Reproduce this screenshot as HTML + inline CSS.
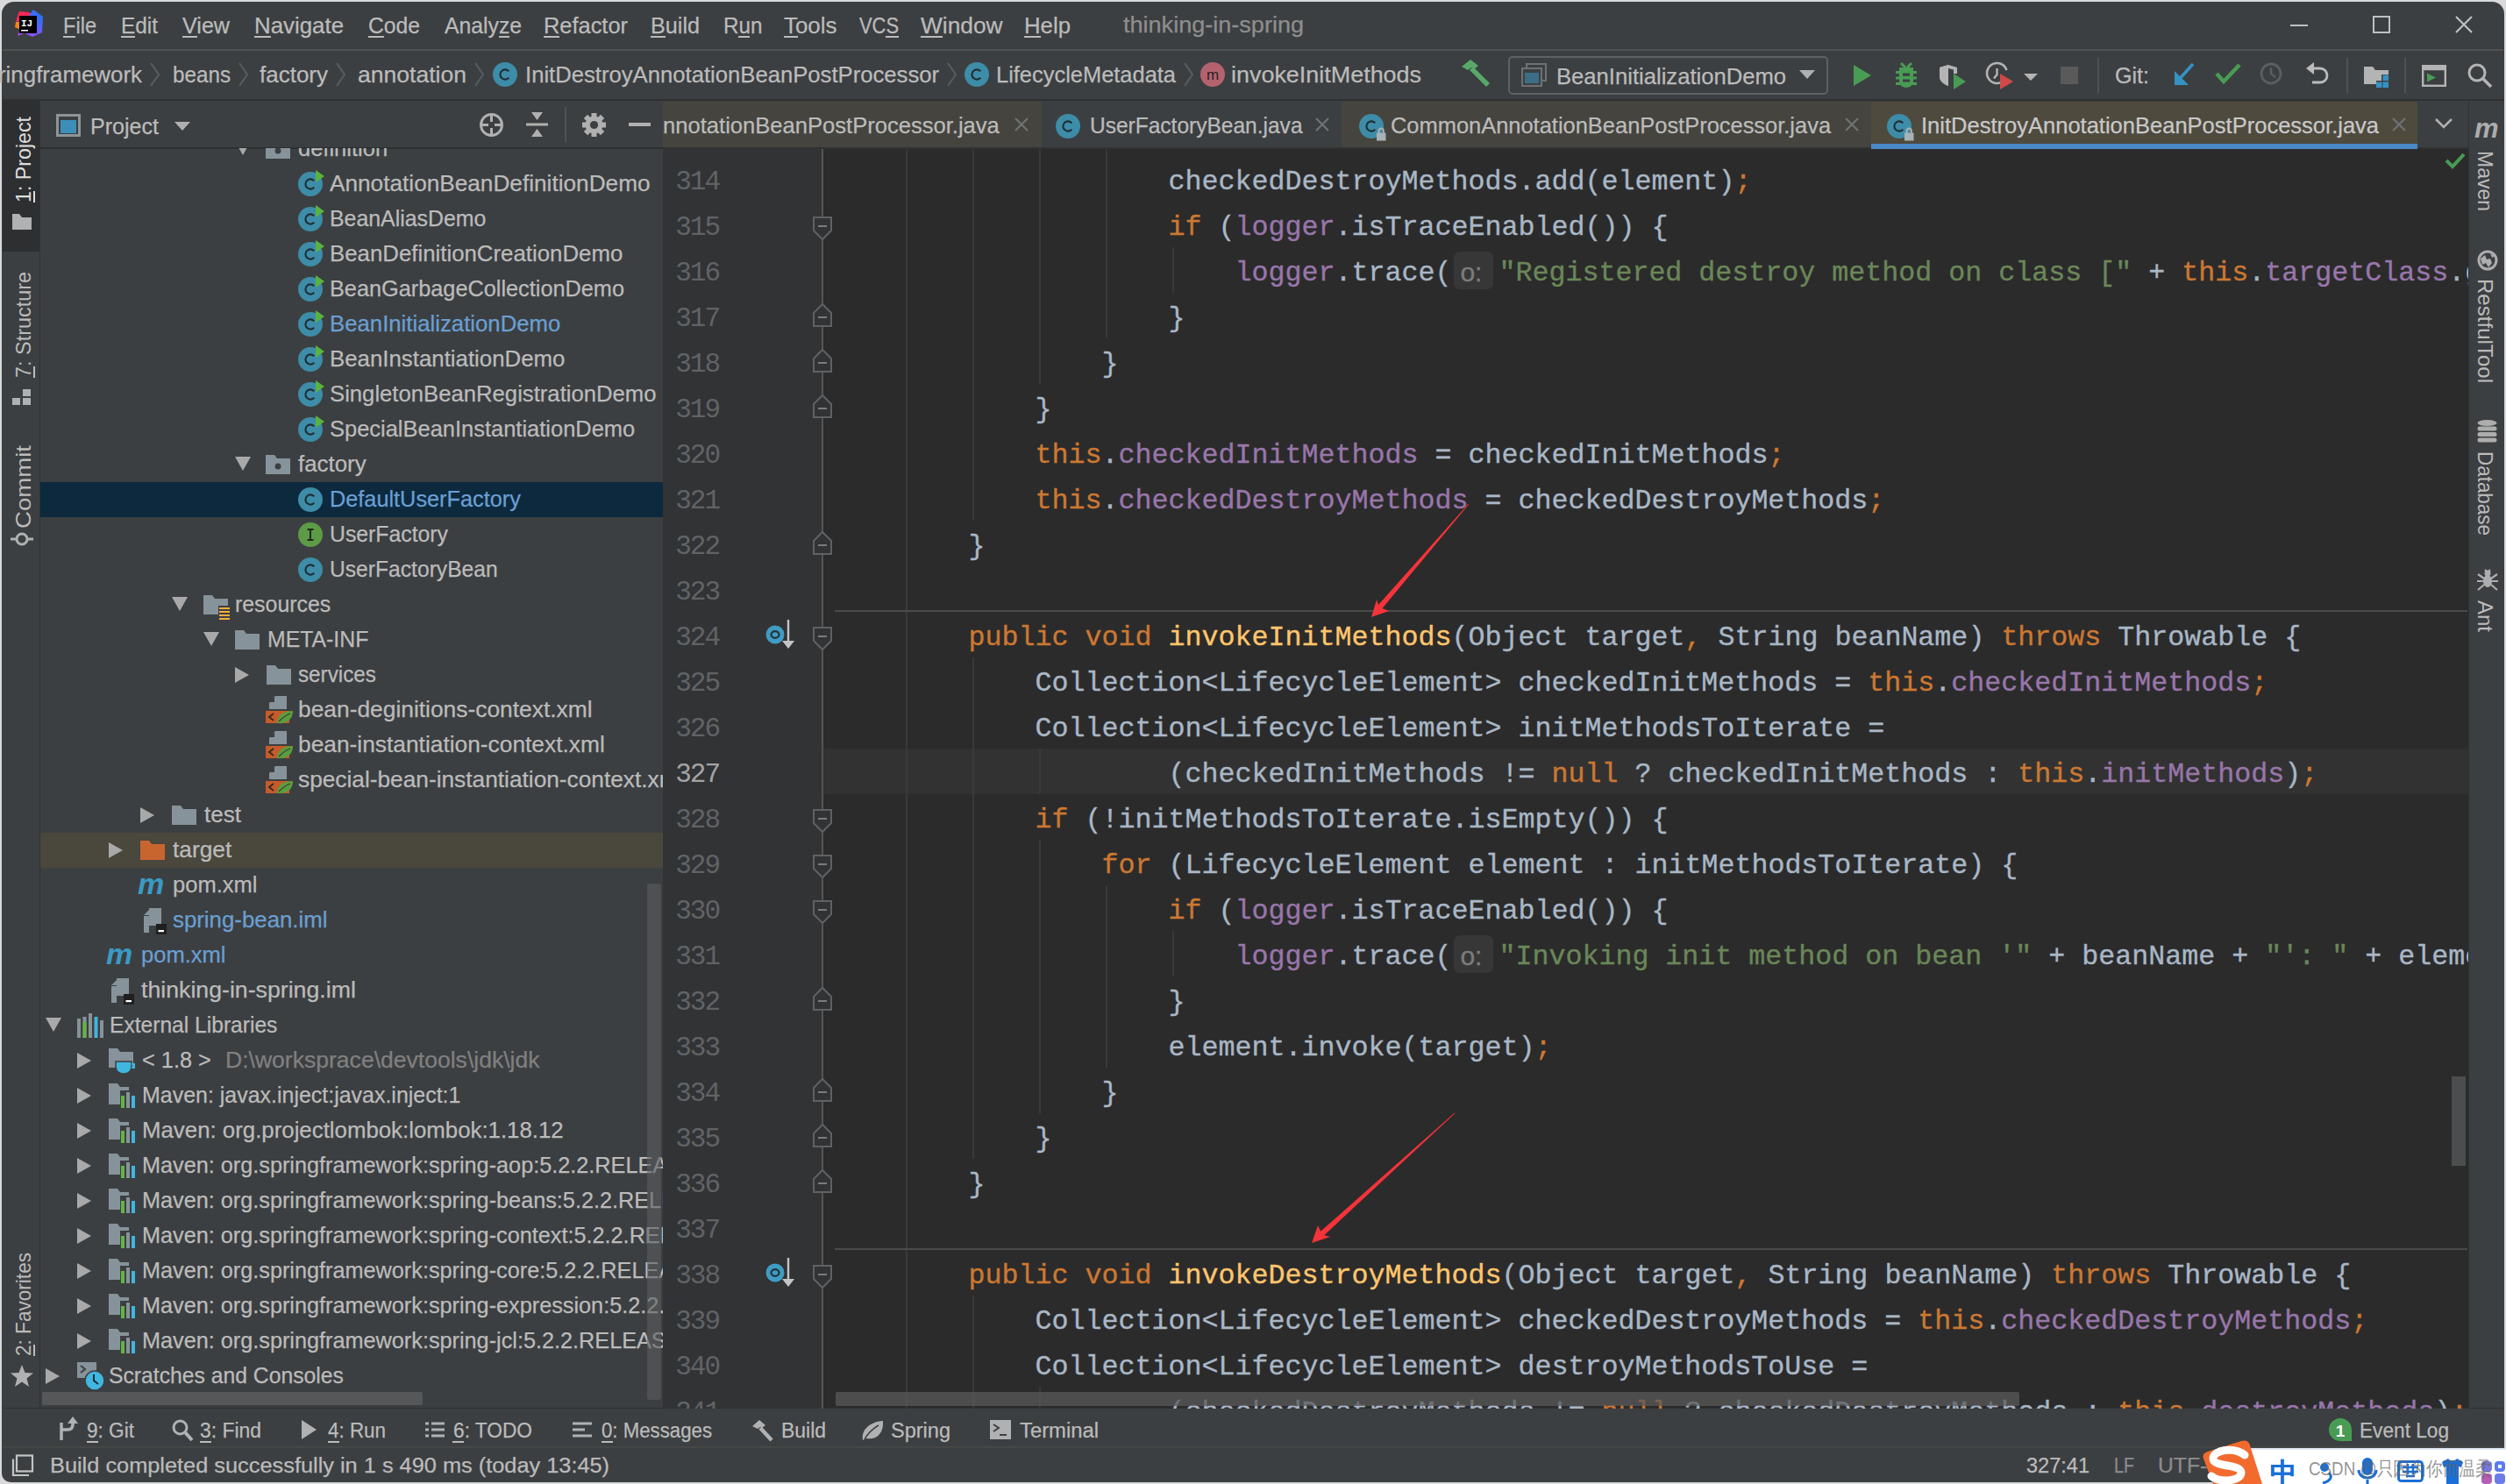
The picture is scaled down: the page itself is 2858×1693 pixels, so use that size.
<!DOCTYPE html>
<html><head><meta charset="utf-8"><title>thinking-in-spring</title>
<style>
html,body{margin:0;padding:0;}
body{width:2858px;height:1693px;overflow:hidden;position:relative;background:#d9d9dc;font-family:"Liberation Sans",sans-serif;}
svg{overflow:visible;}
u{text-decoration:underline;text-underline-offset:4px;text-decoration-thickness:2px;}
</style></head><body>
<div style="position:absolute;left:2px;top:2px;width:2854px;height:1689px;background:#3c3f41;border-radius:14px 14px 10px 10px;"></div>
<div style="position:absolute;left:3px;top:56px;width:2852px;height:2px;background:#515151;"></div>
<div style="position:absolute;left:3px;top:113px;width:2852px;height:2px;background:#2f3133;"></div>
<div style="position:absolute;left:3px;top:115px;width:42px;height:1491px;background:#3c3f41;"></div>
<div style="position:absolute;left:3px;top:115px;width:42px;height:172px;background:#2d2f31;"></div>
<div style="position:absolute;left:45px;top:115px;width:1px;height:1491px;background:#2f3133;"></div>
<div style="position:absolute;left:46px;top:115px;width:710px;height:1491px;background:#3c3f41;"></div>
<div style="position:absolute;left:46px;top:168px;width:710px;height:2px;background:#2d2f30;"></div>
<div style="position:absolute;left:756px;top:115px;width:2059px;height:53px;background:#3c3f41;"></div>
<div style="position:absolute;left:756px;top:168px;width:2059px;height:2px;background:#323232;"></div>
<div style="position:absolute;left:756px;top:170px;width:2059px;height:1437px;background:#2b2b2b;"></div>
<div style="position:absolute;left:756px;top:170px;width:182px;height:1437px;background:#313335;"></div>
<div style="position:absolute;left:2815px;top:115px;width:1px;height:1491px;background:#2f3133;"></div>
<div style="position:absolute;left:2816px;top:115px;width:39px;height:1491px;background:#3c3f41;"></div>
<div style="position:absolute;left:3px;top:1606px;width:2852px;height:1px;background:#2f3133;"></div>
<div style="position:absolute;left:3px;top:1650px;width:2852px;height:2px;background:#474747;"></div>
<div style="position:absolute;left:756px;top:170px;width:2059px;height:1437px;overflow:hidden;">
<div style="position:absolute;left:183px;top:684px;width:2059px;height:52px;background:#323232;"></div>
<div style="position:absolute;left:0px;top:684px;width:182px;height:52px;background:#313335;"></div>
<div style="position:absolute;left:277px;top:0px;width:2px;height:1516px;background:#393939;"></div>
<div style="position:absolute;left:353px;top:0px;width:2px;height:424px;background:#393939;"></div>
<div style="position:absolute;left:429px;top:0px;width:2px;height:268px;background:#393939;"></div>
<div style="position:absolute;left:505px;top:0px;width:2px;height:216px;background:#393939;"></div>
<div style="position:absolute;left:581px;top:112px;width:2px;height:52px;background:#393939;"></div>
<div style="position:absolute;left:353px;top:580px;width:2px;height:572px;background:#393939;"></div>
<div style="position:absolute;left:429px;top:684px;width:2px;height:52px;background:#393939;"></div>
<div style="position:absolute;left:429px;top:788px;width:2px;height:312px;background:#393939;"></div>
<div style="position:absolute;left:505px;top:840px;width:2px;height:208px;background:#393939;"></div>
<div style="position:absolute;left:581px;top:892px;width:2px;height:52px;background:#393939;"></div>
<div style="position:absolute;left:353px;top:1308px;width:2px;height:208px;background:#393939;"></div>
<div style="position:absolute;left:429px;top:1412px;width:2px;height:52px;background:#393939;"></div>
<div style="position:absolute;left:196px;top:525.5px;width:1862px;height:2px;background:#4b4b4b;"></div>
<div style="position:absolute;left:196px;top:1253.5px;width:1862px;height:2px;background:#4b4b4b;"></div>
<div style="position:absolute;left:-59px;width:123px;text-align:right;top:-40px;height:52px;line-height:52px;font-family:'Liberation Mono',monospace;font-size:31px;letter-spacing:-2px;color:#606366;white-space:pre;">313</div>
<div style="position:absolute;left:-59px;width:123px;text-align:right;top:12px;height:52px;line-height:52px;font-family:'Liberation Mono',monospace;font-size:31px;letter-spacing:-2px;color:#606366;white-space:pre;">314</div>
<div style="position:absolute;left:-59px;width:123px;text-align:right;top:64px;height:52px;line-height:52px;font-family:'Liberation Mono',monospace;font-size:31px;letter-spacing:-2px;color:#606366;white-space:pre;">315</div>
<div style="position:absolute;left:-59px;width:123px;text-align:right;top:116px;height:52px;line-height:52px;font-family:'Liberation Mono',monospace;font-size:31px;letter-spacing:-2px;color:#606366;white-space:pre;">316</div>
<div style="position:absolute;left:-59px;width:123px;text-align:right;top:168px;height:52px;line-height:52px;font-family:'Liberation Mono',monospace;font-size:31px;letter-spacing:-2px;color:#606366;white-space:pre;">317</div>
<div style="position:absolute;left:-59px;width:123px;text-align:right;top:220px;height:52px;line-height:52px;font-family:'Liberation Mono',monospace;font-size:31px;letter-spacing:-2px;color:#606366;white-space:pre;">318</div>
<div style="position:absolute;left:-59px;width:123px;text-align:right;top:272px;height:52px;line-height:52px;font-family:'Liberation Mono',monospace;font-size:31px;letter-spacing:-2px;color:#606366;white-space:pre;">319</div>
<div style="position:absolute;left:-59px;width:123px;text-align:right;top:324px;height:52px;line-height:52px;font-family:'Liberation Mono',monospace;font-size:31px;letter-spacing:-2px;color:#606366;white-space:pre;">320</div>
<div style="position:absolute;left:-59px;width:123px;text-align:right;top:376px;height:52px;line-height:52px;font-family:'Liberation Mono',monospace;font-size:31px;letter-spacing:-2px;color:#606366;white-space:pre;">321</div>
<div style="position:absolute;left:-59px;width:123px;text-align:right;top:428px;height:52px;line-height:52px;font-family:'Liberation Mono',monospace;font-size:31px;letter-spacing:-2px;color:#606366;white-space:pre;">322</div>
<div style="position:absolute;left:-59px;width:123px;text-align:right;top:480px;height:52px;line-height:52px;font-family:'Liberation Mono',monospace;font-size:31px;letter-spacing:-2px;color:#606366;white-space:pre;">323</div>
<div style="position:absolute;left:-59px;width:123px;text-align:right;top:532px;height:52px;line-height:52px;font-family:'Liberation Mono',monospace;font-size:31px;letter-spacing:-2px;color:#606366;white-space:pre;">324</div>
<div style="position:absolute;left:-59px;width:123px;text-align:right;top:584px;height:52px;line-height:52px;font-family:'Liberation Mono',monospace;font-size:31px;letter-spacing:-2px;color:#606366;white-space:pre;">325</div>
<div style="position:absolute;left:-59px;width:123px;text-align:right;top:636px;height:52px;line-height:52px;font-family:'Liberation Mono',monospace;font-size:31px;letter-spacing:-2px;color:#606366;white-space:pre;">326</div>
<div style="position:absolute;left:-59px;width:123px;text-align:right;top:688px;height:52px;line-height:52px;font-family:'Liberation Mono',monospace;font-size:31px;letter-spacing:-2px;color:#a4a3a3;white-space:pre;">327</div>
<div style="position:absolute;left:-59px;width:123px;text-align:right;top:740px;height:52px;line-height:52px;font-family:'Liberation Mono',monospace;font-size:31px;letter-spacing:-2px;color:#606366;white-space:pre;">328</div>
<div style="position:absolute;left:-59px;width:123px;text-align:right;top:792px;height:52px;line-height:52px;font-family:'Liberation Mono',monospace;font-size:31px;letter-spacing:-2px;color:#606366;white-space:pre;">329</div>
<div style="position:absolute;left:-59px;width:123px;text-align:right;top:844px;height:52px;line-height:52px;font-family:'Liberation Mono',monospace;font-size:31px;letter-spacing:-2px;color:#606366;white-space:pre;">330</div>
<div style="position:absolute;left:-59px;width:123px;text-align:right;top:896px;height:52px;line-height:52px;font-family:'Liberation Mono',monospace;font-size:31px;letter-spacing:-2px;color:#606366;white-space:pre;">331</div>
<div style="position:absolute;left:-59px;width:123px;text-align:right;top:948px;height:52px;line-height:52px;font-family:'Liberation Mono',monospace;font-size:31px;letter-spacing:-2px;color:#606366;white-space:pre;">332</div>
<div style="position:absolute;left:-59px;width:123px;text-align:right;top:1000px;height:52px;line-height:52px;font-family:'Liberation Mono',monospace;font-size:31px;letter-spacing:-2px;color:#606366;white-space:pre;">333</div>
<div style="position:absolute;left:-59px;width:123px;text-align:right;top:1052px;height:52px;line-height:52px;font-family:'Liberation Mono',monospace;font-size:31px;letter-spacing:-2px;color:#606366;white-space:pre;">334</div>
<div style="position:absolute;left:-59px;width:123px;text-align:right;top:1104px;height:52px;line-height:52px;font-family:'Liberation Mono',monospace;font-size:31px;letter-spacing:-2px;color:#606366;white-space:pre;">335</div>
<div style="position:absolute;left:-59px;width:123px;text-align:right;top:1156px;height:52px;line-height:52px;font-family:'Liberation Mono',monospace;font-size:31px;letter-spacing:-2px;color:#606366;white-space:pre;">336</div>
<div style="position:absolute;left:-59px;width:123px;text-align:right;top:1208px;height:52px;line-height:52px;font-family:'Liberation Mono',monospace;font-size:31px;letter-spacing:-2px;color:#606366;white-space:pre;">337</div>
<div style="position:absolute;left:-59px;width:123px;text-align:right;top:1260px;height:52px;line-height:52px;font-family:'Liberation Mono',monospace;font-size:31px;letter-spacing:-2px;color:#606366;white-space:pre;">338</div>
<div style="position:absolute;left:-59px;width:123px;text-align:right;top:1312px;height:52px;line-height:52px;font-family:'Liberation Mono',monospace;font-size:31px;letter-spacing:-2px;color:#606366;white-space:pre;">339</div>
<div style="position:absolute;left:-59px;width:123px;text-align:right;top:1364px;height:52px;line-height:52px;font-family:'Liberation Mono',monospace;font-size:31px;letter-spacing:-2px;color:#606366;white-space:pre;">340</div>
<div style="position:absolute;left:-59px;width:123px;text-align:right;top:1416px;height:52px;line-height:52px;font-family:'Liberation Mono',monospace;font-size:31px;letter-spacing:-2px;color:#606366;white-space:pre;">341</div>
<div style="position:absolute;left:272.5px;top:12px;height:52px;line-height:52px;font-family:'Liberation Mono',monospace;font-size:31.67px;white-space:pre;-webkit-text-stroke:0.35px currentColor;">                <span style="color:#a9b7c6">checkedDestroyMethods</span><span style="color:#a9b7c6">.</span><span style="color:#a9b7c6">add</span><span style="color:#a9b7c6">(</span><span style="color:#a9b7c6">element</span><span style="color:#a9b7c6">)</span><span style="color:#cc7832">;</span></div>
<div style="position:absolute;left:272.5px;top:64px;height:52px;line-height:52px;font-family:'Liberation Mono',monospace;font-size:31.67px;white-space:pre;-webkit-text-stroke:0.35px currentColor;">                <span style="color:#cc7832">if</span> <span style="color:#a9b7c6">(</span><span style="color:#9876aa">logger</span><span style="color:#a9b7c6">.</span><span style="color:#a9b7c6">isTraceEnabled</span><span style="color:#a9b7c6">(</span><span style="color:#a9b7c6">)</span><span style="color:#a9b7c6">)</span> <span style="color:#a9b7c6">{</span></div>
<div style="position:absolute;left:272.5px;top:116px;height:52px;line-height:52px;font-family:'Liberation Mono',monospace;font-size:31.67px;white-space:pre;-webkit-text-stroke:0.35px currentColor;">                    <span style="color:#9876aa">logger</span><span style="color:#a9b7c6">.</span><span style="color:#a9b7c6">trace</span><span style="color:#a9b7c6">(</span><span style="display:inline-block;vertical-align:top;width:54px;height:52px;position:relative;"><span style="position:absolute;left:3px;top:1px;width:45px;height:43px;background:#373737;border-radius:7px;"></span><span style="position:absolute;left:10px;top:-1px;color:#7c7c7c;font-family:'Liberation Sans',sans-serif;font-size:30px;">o:</span></span><span style="color:#6a8759">&quot;Registered destroy method on class [&quot;</span> <span style="color:#a9b7c6">+</span> <span style="color:#cc7832">this</span><span style="color:#a9b7c6">.</span><span style="color:#9876aa">targetClass</span><span style="color:#a9b7c6">.</span><span style="color:#a9b7c6">getName</span><span style="color:#a9b7c6">(</span><span style="color:#a9b7c6">)</span> <span style="color:#a9b7c6">+</span> <span style="color:#6a8759">&quot;]: &quot;</span> <span style="color:#a9b7c6">+</span> <span style="color:#a9b7c6">element</span><span style="color:#a9b7c6">)</span><span style="color:#cc7832">;</span></div>
<div style="position:absolute;left:272.5px;top:168px;height:52px;line-height:52px;font-family:'Liberation Mono',monospace;font-size:31.67px;white-space:pre;-webkit-text-stroke:0.35px currentColor;">                <span style="color:#a9b7c6">}</span></div>
<div style="position:absolute;left:272.5px;top:220px;height:52px;line-height:52px;font-family:'Liberation Mono',monospace;font-size:31.67px;white-space:pre;-webkit-text-stroke:0.35px currentColor;">            <span style="color:#a9b7c6">}</span></div>
<div style="position:absolute;left:272.5px;top:272px;height:52px;line-height:52px;font-family:'Liberation Mono',monospace;font-size:31.67px;white-space:pre;-webkit-text-stroke:0.35px currentColor;">        <span style="color:#a9b7c6">}</span></div>
<div style="position:absolute;left:272.5px;top:324px;height:52px;line-height:52px;font-family:'Liberation Mono',monospace;font-size:31.67px;white-space:pre;-webkit-text-stroke:0.35px currentColor;">        <span style="color:#cc7832">this</span><span style="color:#a9b7c6">.</span><span style="color:#9876aa">checkedInitMethods</span> <span style="color:#a9b7c6">=</span> <span style="color:#a9b7c6">checkedInitMethods</span><span style="color:#cc7832">;</span></div>
<div style="position:absolute;left:272.5px;top:376px;height:52px;line-height:52px;font-family:'Liberation Mono',monospace;font-size:31.67px;white-space:pre;-webkit-text-stroke:0.35px currentColor;">        <span style="color:#cc7832">this</span><span style="color:#a9b7c6">.</span><span style="color:#9876aa">checkedDestroyMethods</span> <span style="color:#a9b7c6">=</span> <span style="color:#a9b7c6">checkedDestroyMethods</span><span style="color:#cc7832">;</span></div>
<div style="position:absolute;left:272.5px;top:428px;height:52px;line-height:52px;font-family:'Liberation Mono',monospace;font-size:31.67px;white-space:pre;-webkit-text-stroke:0.35px currentColor;">    <span style="color:#a9b7c6">}</span></div>
<div style="position:absolute;left:272.5px;top:480px;height:52px;line-height:52px;font-family:'Liberation Mono',monospace;font-size:31.67px;white-space:pre;-webkit-text-stroke:0.35px currentColor;"></div>
<div style="position:absolute;left:272.5px;top:532px;height:52px;line-height:52px;font-family:'Liberation Mono',monospace;font-size:31.67px;white-space:pre;-webkit-text-stroke:0.35px currentColor;">    <span style="color:#cc7832">public</span> <span style="color:#cc7832">void</span> <span style="color:#ffc66d">invokeInitMethods</span><span style="color:#a9b7c6">(</span><span style="color:#a9b7c6">Object</span> <span style="color:#a9b7c6">target</span><span style="color:#cc7832">,</span> <span style="color:#a9b7c6">String</span> <span style="color:#a9b7c6">beanName</span><span style="color:#a9b7c6">)</span> <span style="color:#cc7832">throws</span> <span style="color:#a9b7c6">Throwable</span> <span style="color:#a9b7c6">{</span></div>
<div style="position:absolute;left:272.5px;top:584px;height:52px;line-height:52px;font-family:'Liberation Mono',monospace;font-size:31.67px;white-space:pre;-webkit-text-stroke:0.35px currentColor;">        <span style="color:#a9b7c6">Collection</span><span style="color:#a9b7c6">&lt;</span><span style="color:#a9b7c6">LifecycleElement</span><span style="color:#a9b7c6">&gt;</span> <span style="color:#a9b7c6">checkedInitMethods</span> <span style="color:#a9b7c6">=</span> <span style="color:#cc7832">this</span><span style="color:#a9b7c6">.</span><span style="color:#9876aa">checkedInitMethods</span><span style="color:#cc7832">;</span></div>
<div style="position:absolute;left:272.5px;top:636px;height:52px;line-height:52px;font-family:'Liberation Mono',monospace;font-size:31.67px;white-space:pre;-webkit-text-stroke:0.35px currentColor;">        <span style="color:#a9b7c6">Collection</span><span style="color:#a9b7c6">&lt;</span><span style="color:#a9b7c6">LifecycleElement</span><span style="color:#a9b7c6">&gt;</span> <span style="color:#a9b7c6">initMethodsToIterate</span> <span style="color:#a9b7c6">=</span></div>
<div style="position:absolute;left:272.5px;top:688px;height:52px;line-height:52px;font-family:'Liberation Mono',monospace;font-size:31.67px;white-space:pre;-webkit-text-stroke:0.35px currentColor;">                <span style="color:#a9b7c6">(</span><span style="color:#a9b7c6">checkedInitMethods</span> <span style="color:#a9b7c6">!</span><span style="color:#a9b7c6">=</span> <span style="color:#cc7832">null</span> <span style="color:#a9b7c6">?</span> <span style="color:#a9b7c6">checkedInitMethods</span> <span style="color:#a9b7c6">:</span> <span style="color:#cc7832">this</span><span style="color:#a9b7c6">.</span><span style="color:#9876aa">initMethods</span><span style="color:#a9b7c6">)</span><span style="color:#cc7832">;</span></div>
<div style="position:absolute;left:272.5px;top:740px;height:52px;line-height:52px;font-family:'Liberation Mono',monospace;font-size:31.67px;white-space:pre;-webkit-text-stroke:0.35px currentColor;">        <span style="color:#cc7832">if</span> <span style="color:#a9b7c6">(</span><span style="color:#a9b7c6">!</span><span style="color:#a9b7c6">initMethodsToIterate</span><span style="color:#a9b7c6">.</span><span style="color:#a9b7c6">isEmpty</span><span style="color:#a9b7c6">(</span><span style="color:#a9b7c6">)</span><span style="color:#a9b7c6">)</span> <span style="color:#a9b7c6">{</span></div>
<div style="position:absolute;left:272.5px;top:792px;height:52px;line-height:52px;font-family:'Liberation Mono',monospace;font-size:31.67px;white-space:pre;-webkit-text-stroke:0.35px currentColor;">            <span style="color:#cc7832">for</span> <span style="color:#a9b7c6">(</span><span style="color:#a9b7c6">LifecycleElement</span> <span style="color:#a9b7c6">element</span> <span style="color:#a9b7c6">:</span> <span style="color:#a9b7c6">initMethodsToIterate</span><span style="color:#a9b7c6">)</span> <span style="color:#a9b7c6">{</span></div>
<div style="position:absolute;left:272.5px;top:844px;height:52px;line-height:52px;font-family:'Liberation Mono',monospace;font-size:31.67px;white-space:pre;-webkit-text-stroke:0.35px currentColor;">                <span style="color:#cc7832">if</span> <span style="color:#a9b7c6">(</span><span style="color:#9876aa">logger</span><span style="color:#a9b7c6">.</span><span style="color:#a9b7c6">isTraceEnabled</span><span style="color:#a9b7c6">(</span><span style="color:#a9b7c6">)</span><span style="color:#a9b7c6">)</span> <span style="color:#a9b7c6">{</span></div>
<div style="position:absolute;left:272.5px;top:896px;height:52px;line-height:52px;font-family:'Liberation Mono',monospace;font-size:31.67px;white-space:pre;-webkit-text-stroke:0.35px currentColor;">                    <span style="color:#9876aa">logger</span><span style="color:#a9b7c6">.</span><span style="color:#a9b7c6">trace</span><span style="color:#a9b7c6">(</span><span style="display:inline-block;vertical-align:top;width:54px;height:52px;position:relative;"><span style="position:absolute;left:3px;top:1px;width:45px;height:43px;background:#373737;border-radius:7px;"></span><span style="position:absolute;left:10px;top:-1px;color:#7c7c7c;font-family:'Liberation Sans',sans-serif;font-size:30px;">o:</span></span><span style="color:#6a8759">&quot;Invoking init method on bean &#x27;&quot;</span> <span style="color:#a9b7c6">+</span> <span style="color:#a9b7c6">beanName</span> <span style="color:#a9b7c6">+</span> <span style="color:#6a8759">&quot;&#x27;: &quot;</span> <span style="color:#a9b7c6">+</span> <span style="color:#a9b7c6">element</span><span style="color:#a9b7c6">.</span><span style="color:#a9b7c6">getMethod</span><span style="color:#a9b7c6">(</span><span style="color:#a9b7c6">)</span><span style="color:#a9b7c6">)</span><span style="color:#cc7832">;</span></div>
<div style="position:absolute;left:272.5px;top:948px;height:52px;line-height:52px;font-family:'Liberation Mono',monospace;font-size:31.67px;white-space:pre;-webkit-text-stroke:0.35px currentColor;">                <span style="color:#a9b7c6">}</span></div>
<div style="position:absolute;left:272.5px;top:1000px;height:52px;line-height:52px;font-family:'Liberation Mono',monospace;font-size:31.67px;white-space:pre;-webkit-text-stroke:0.35px currentColor;">                <span style="color:#a9b7c6">element</span><span style="color:#a9b7c6">.</span><span style="color:#a9b7c6">invoke</span><span style="color:#a9b7c6">(</span><span style="color:#a9b7c6">target</span><span style="color:#a9b7c6">)</span><span style="color:#cc7832">;</span></div>
<div style="position:absolute;left:272.5px;top:1052px;height:52px;line-height:52px;font-family:'Liberation Mono',monospace;font-size:31.67px;white-space:pre;-webkit-text-stroke:0.35px currentColor;">            <span style="color:#a9b7c6">}</span></div>
<div style="position:absolute;left:272.5px;top:1104px;height:52px;line-height:52px;font-family:'Liberation Mono',monospace;font-size:31.67px;white-space:pre;-webkit-text-stroke:0.35px currentColor;">        <span style="color:#a9b7c6">}</span></div>
<div style="position:absolute;left:272.5px;top:1156px;height:52px;line-height:52px;font-family:'Liberation Mono',monospace;font-size:31.67px;white-space:pre;-webkit-text-stroke:0.35px currentColor;">    <span style="color:#a9b7c6">}</span></div>
<div style="position:absolute;left:272.5px;top:1208px;height:52px;line-height:52px;font-family:'Liberation Mono',monospace;font-size:31.67px;white-space:pre;-webkit-text-stroke:0.35px currentColor;"></div>
<div style="position:absolute;left:272.5px;top:1260px;height:52px;line-height:52px;font-family:'Liberation Mono',monospace;font-size:31.67px;white-space:pre;-webkit-text-stroke:0.35px currentColor;">    <span style="color:#cc7832">public</span> <span style="color:#cc7832">void</span> <span style="color:#ffc66d">invokeDestroyMethods</span><span style="color:#a9b7c6">(</span><span style="color:#a9b7c6">Object</span> <span style="color:#a9b7c6">target</span><span style="color:#cc7832">,</span> <span style="color:#a9b7c6">String</span> <span style="color:#a9b7c6">beanName</span><span style="color:#a9b7c6">)</span> <span style="color:#cc7832">throws</span> <span style="color:#a9b7c6">Throwable</span> <span style="color:#a9b7c6">{</span></div>
<div style="position:absolute;left:272.5px;top:1312px;height:52px;line-height:52px;font-family:'Liberation Mono',monospace;font-size:31.67px;white-space:pre;-webkit-text-stroke:0.35px currentColor;">        <span style="color:#a9b7c6">Collection</span><span style="color:#a9b7c6">&lt;</span><span style="color:#a9b7c6">LifecycleElement</span><span style="color:#a9b7c6">&gt;</span> <span style="color:#a9b7c6">checkedDestroyMethods</span> <span style="color:#a9b7c6">=</span> <span style="color:#cc7832">this</span><span style="color:#a9b7c6">.</span><span style="color:#9876aa">checkedDestroyMethods</span><span style="color:#cc7832">;</span></div>
<div style="position:absolute;left:272.5px;top:1364px;height:52px;line-height:52px;font-family:'Liberation Mono',monospace;font-size:31.67px;white-space:pre;-webkit-text-stroke:0.35px currentColor;">        <span style="color:#a9b7c6">Collection</span><span style="color:#a9b7c6">&lt;</span><span style="color:#a9b7c6">LifecycleElement</span><span style="color:#a9b7c6">&gt;</span> <span style="color:#a9b7c6">destroyMethodsToUse</span> <span style="color:#a9b7c6">=</span></div>
<div style="position:absolute;left:272.5px;top:1416px;height:52px;line-height:52px;font-family:'Liberation Mono',monospace;font-size:31.67px;white-space:pre;-webkit-text-stroke:0.35px currentColor;">                <span style="color:#a9b7c6">(</span><span style="color:#a9b7c6">checkedDestroyMethods</span> <span style="color:#a9b7c6">!</span><span style="color:#a9b7c6">=</span> <span style="color:#cc7832">null</span> <span style="color:#a9b7c6">?</span> <span style="color:#a9b7c6">checkedDestroyMethods</span> <span style="color:#a9b7c6">:</span> <span style="color:#cc7832">this</span><span style="color:#a9b7c6">.</span><span style="color:#9876aa">destroyMethods</span><span style="color:#a9b7c6">)</span><span style="color:#cc7832">;</span></div>
<div style="position:absolute;left:181px;top:0px;width:2px;height:1437px;background:#555555;"></div>
</div>
<svg style="position:absolute;left:927px;top:247px;" width="22" height="27" viewBox="0 0 22 27"><path d="M1,1 H21 V16 L11,26 L1,16 Z" fill="#313335" stroke="#5f6163" stroke-width="2"/><path d="M6,11 H16" stroke="#7a7c7e" stroke-width="2"/></svg>
<svg style="position:absolute;left:927px;top:715px;" width="22" height="27" viewBox="0 0 22 27"><path d="M1,1 H21 V16 L11,26 L1,16 Z" fill="#313335" stroke="#5f6163" stroke-width="2"/><path d="M6,11 H16" stroke="#7a7c7e" stroke-width="2"/></svg>
<svg style="position:absolute;left:927px;top:923px;" width="22" height="27" viewBox="0 0 22 27"><path d="M1,1 H21 V16 L11,26 L1,16 Z" fill="#313335" stroke="#5f6163" stroke-width="2"/><path d="M6,11 H16" stroke="#7a7c7e" stroke-width="2"/></svg>
<svg style="position:absolute;left:927px;top:975px;" width="22" height="27" viewBox="0 0 22 27"><path d="M1,1 H21 V16 L11,26 L1,16 Z" fill="#313335" stroke="#5f6163" stroke-width="2"/><path d="M6,11 H16" stroke="#7a7c7e" stroke-width="2"/></svg>
<svg style="position:absolute;left:927px;top:1027px;" width="22" height="27" viewBox="0 0 22 27"><path d="M1,1 H21 V16 L11,26 L1,16 Z" fill="#313335" stroke="#5f6163" stroke-width="2"/><path d="M6,11 H16" stroke="#7a7c7e" stroke-width="2"/></svg>
<svg style="position:absolute;left:927px;top:1443px;" width="22" height="27" viewBox="0 0 22 27"><path d="M1,1 H21 V16 L11,26 L1,16 Z" fill="#313335" stroke="#5f6163" stroke-width="2"/><path d="M6,11 H16" stroke="#7a7c7e" stroke-width="2"/></svg>
<svg style="position:absolute;left:927px;top:346px;" width="22" height="27" viewBox="0 0 22 27"><path d="M1,26 H21 V11 L11,1 L1,11 Z" fill="#313335" stroke="#5f6163" stroke-width="2"/><path d="M6,16 H16" stroke="#7a7c7e" stroke-width="2"/></svg>
<svg style="position:absolute;left:927px;top:398px;" width="22" height="27" viewBox="0 0 22 27"><path d="M1,26 H21 V11 L11,1 L1,11 Z" fill="#313335" stroke="#5f6163" stroke-width="2"/><path d="M6,16 H16" stroke="#7a7c7e" stroke-width="2"/></svg>
<svg style="position:absolute;left:927px;top:450px;" width="22" height="27" viewBox="0 0 22 27"><path d="M1,26 H21 V11 L11,1 L1,11 Z" fill="#313335" stroke="#5f6163" stroke-width="2"/><path d="M6,16 H16" stroke="#7a7c7e" stroke-width="2"/></svg>
<svg style="position:absolute;left:927px;top:606px;" width="22" height="27" viewBox="0 0 22 27"><path d="M1,26 H21 V11 L11,1 L1,11 Z" fill="#313335" stroke="#5f6163" stroke-width="2"/><path d="M6,16 H16" stroke="#7a7c7e" stroke-width="2"/></svg>
<svg style="position:absolute;left:927px;top:1126px;" width="22" height="27" viewBox="0 0 22 27"><path d="M1,26 H21 V11 L11,1 L1,11 Z" fill="#313335" stroke="#5f6163" stroke-width="2"/><path d="M6,16 H16" stroke="#7a7c7e" stroke-width="2"/></svg>
<svg style="position:absolute;left:927px;top:1230px;" width="22" height="27" viewBox="0 0 22 27"><path d="M1,26 H21 V11 L11,1 L1,11 Z" fill="#313335" stroke="#5f6163" stroke-width="2"/><path d="M6,16 H16" stroke="#7a7c7e" stroke-width="2"/></svg>
<svg style="position:absolute;left:927px;top:1282px;" width="22" height="27" viewBox="0 0 22 27"><path d="M1,26 H21 V11 L11,1 L1,11 Z" fill="#313335" stroke="#5f6163" stroke-width="2"/><path d="M6,16 H16" stroke="#7a7c7e" stroke-width="2"/></svg>
<svg style="position:absolute;left:927px;top:1334px;" width="22" height="27" viewBox="0 0 22 27"><path d="M1,26 H21 V11 L11,1 L1,11 Z" fill="#313335" stroke="#5f6163" stroke-width="2"/><path d="M6,16 H16" stroke="#7a7c7e" stroke-width="2"/></svg>
<svg style="position:absolute;left:872px;top:707px;" width="36" height="34" viewBox="0 0 36 34"><circle cx="12" cy="17" r="10.5" fill="#3f9cc2"/><ellipse cx="12" cy="17" rx="4.5" ry="3.8" fill="none" stroke="#22333d" stroke-width="2.2"/><path d="M27,0 V28" stroke="#c4c4c4" stroke-width="2.4"/><path d="M20,24 L27,33 L34,24 Z" fill="#c4c4c4"/></svg>
<svg style="position:absolute;left:872px;top:1435px;" width="36" height="34" viewBox="0 0 36 34"><circle cx="12" cy="17" r="10.5" fill="#3f9cc2"/><ellipse cx="12" cy="17" rx="4.5" ry="3.8" fill="none" stroke="#22333d" stroke-width="2.2"/><path d="M27,0 V28" stroke="#c4c4c4" stroke-width="2.4"/><path d="M20,24 L27,33 L34,24 Z" fill="#c4c4c4"/></svg>
<svg style="position:absolute;left:0;top:0;" width="2858" height="1693"><polygon points="1674.7,574.7 1572.0,690.1 1570.0,684.0 1564.0,704.0 1584.0,697.0 1576.5,694.0 1675.3,575.3" fill="#f5333a"/></svg>
<svg style="position:absolute;left:0;top:0;" width="2858" height="1693"><polygon points="1658.7,1269.7 1506.2,1404.7 1503.0,1398.0 1496.0,1418.0 1517.0,1411.0 1510.2,1409.2 1659.3,1270.3" fill="#f5333a"/></svg>
<div style="position:absolute;left:2796px;top:1228px;width:16px;height:102px;background:#4b4d4f;"></div>
<div style="position:absolute;left:953px;top:1588px;width:1350px;height:16px;background:rgba(90,90,90,0.75);border-radius:2px;"></div>
<svg style="position:absolute;left:2788px;top:173px;" width="24" height="20" viewBox="0 0 24 20"><path d="M2,10 L9,17 L22,3" fill="none" stroke="#499c54" stroke-width="4"/></svg>
<svg style="position:absolute;left:16px;top:11px;" width="33" height="31" viewBox="0 0 33 31"><polygon points="6,2 17,3 22,8 12,15 2,13" fill="#fe2857"/><polygon points="2,14 10,14 8,23 1,20" fill="#fc801d"/><polygon points="22,0 33,8 32,26 21,31 12,27 4,30 8,18" fill="url(#ijg)"/><defs><linearGradient id="ijg" x1="0" y1="1" x2="1" y2="0"><stop offset="0" stop-color="#b345f1"/><stop offset="0.5" stop-color="#6d5cf5"/><stop offset="1" stop-color="#087cfa"/></linearGradient></defs><rect x="6" y="7" width="20" height="20" fill="#000"/><text x="8" y="19" font-family="Liberation Mono" font-weight="bold" font-size="11" fill="#fff">IJ</text><rect x="8" y="23" width="8" height="1.5" fill="#fff"/></svg>
<div style="position:absolute;left:72px;top:12.66px;height:32px;line-height:32px;font-size:25.5px;color:#bbbbbb;font-family:'Liberation Sans', sans-serif;white-space:pre;-webkit-text-stroke:0.25px currentColor;transform:scaleX(0.9249);transform-origin:0 0;">File</div>
<div style="position:absolute;left:72px;top:41px;width:14px;height:2px;background:#bbbbbb;"></div>
<div style="position:absolute;left:138px;top:12.66px;height:32px;line-height:32px;font-size:25.5px;color:#bbbbbb;font-family:'Liberation Sans', sans-serif;white-space:pre;-webkit-text-stroke:0.25px currentColor;transform:scaleX(0.9559);transform-origin:0 0;">Edit</div>
<div style="position:absolute;left:138px;top:41px;width:16px;height:2px;background:#bbbbbb;"></div>
<div style="position:absolute;left:208px;top:12.66px;height:32px;line-height:32px;font-size:25.5px;color:#bbbbbb;font-family:'Liberation Sans', sans-serif;white-space:pre;-webkit-text-stroke:0.25px currentColor;transform:scaleX(0.9852);transform-origin:0 0;">View</div>
<div style="position:absolute;left:208px;top:41px;width:17px;height:2px;background:#bbbbbb;"></div>
<div style="position:absolute;left:290px;top:12.66px;height:32px;line-height:32px;font-size:25.5px;color:#bbbbbb;font-family:'Liberation Sans', sans-serif;white-space:pre;-webkit-text-stroke:0.25px currentColor;transform:scaleX(1.0135);transform-origin:0 0;">Navigate</div>
<div style="position:absolute;left:290px;top:41px;width:19px;height:2px;background:#bbbbbb;"></div>
<div style="position:absolute;left:420px;top:12.66px;height:32px;line-height:32px;font-size:25.5px;color:#bbbbbb;font-family:'Liberation Sans', sans-serif;white-space:pre;-webkit-text-stroke:0.25px currentColor;transform:scaleX(0.9679);transform-origin:0 0;">Code</div>
<div style="position:absolute;left:420px;top:41px;width:18px;height:2px;background:#bbbbbb;"></div>
<div style="position:absolute;left:507px;top:12.66px;height:32px;line-height:32px;font-size:25.5px;color:#bbbbbb;font-family:'Liberation Sans', sans-serif;white-space:pre;-webkit-text-stroke:0.25px currentColor;transform:scaleX(0.9701);transform-origin:0 0;">Analyze</div>
<div style="position:absolute;left:569px;top:41px;width:12px;height:2px;background:#bbbbbb;"></div>
<div style="position:absolute;left:620px;top:12.66px;height:32px;line-height:32px;font-size:25.5px;color:#bbbbbb;font-family:'Liberation Sans', sans-serif;white-space:pre;-webkit-text-stroke:0.25px currentColor;transform:scaleX(0.9962);transform-origin:0 0;">Refactor</div>
<div style="position:absolute;left:620px;top:41px;width:18px;height:2px;background:#bbbbbb;"></div>
<div style="position:absolute;left:742px;top:12.66px;height:32px;line-height:32px;font-size:25.5px;color:#bbbbbb;font-family:'Liberation Sans', sans-serif;white-space:pre;-webkit-text-stroke:0.25px currentColor;transform:scaleX(0.9876);transform-origin:0 0;">Build</div>
<div style="position:absolute;left:742px;top:41px;width:17px;height:2px;background:#bbbbbb;"></div>
<div style="position:absolute;left:824.5px;top:12.66px;height:32px;line-height:32px;font-size:25.5px;color:#bbbbbb;font-family:'Liberation Sans', sans-serif;white-space:pre;-webkit-text-stroke:0.25px currentColor;transform:scaleX(0.9513);transform-origin:0 0;">Run</div>
<div style="position:absolute;left:842px;top:41px;width:13px;height:2px;background:#bbbbbb;"></div>
<div style="position:absolute;left:893.6px;top:12.66px;height:32px;line-height:32px;font-size:25.5px;color:#bbbbbb;font-family:'Liberation Sans', sans-serif;white-space:pre;-webkit-text-stroke:0.25px currentColor;transform:scaleX(1.0147);transform-origin:0 0;">Tools</div>
<div style="position:absolute;left:894px;top:41px;width:16px;height:2px;background:#bbbbbb;"></div>
<div style="position:absolute;left:980px;top:12.66px;height:32px;line-height:32px;font-size:25.5px;color:#bbbbbb;font-family:'Liberation Sans', sans-serif;white-space:pre;-webkit-text-stroke:0.25px currentColor;transform:scaleX(0.8582);transform-origin:0 0;">VCS</div>
<div style="position:absolute;left:1010px;top:41px;width:15px;height:2px;background:#bbbbbb;"></div>
<div style="position:absolute;left:1050px;top:12.66px;height:32px;line-height:32px;font-size:25.5px;color:#bbbbbb;font-family:'Liberation Sans', sans-serif;white-space:pre;-webkit-text-stroke:0.25px currentColor;transform:scaleX(1.0310);transform-origin:0 0;">Window</div>
<div style="position:absolute;left:1050px;top:41px;width:25px;height:2px;background:#bbbbbb;"></div>
<div style="position:absolute;left:1168px;top:12.66px;height:32px;line-height:32px;font-size:25.5px;color:#bbbbbb;font-family:'Liberation Sans', sans-serif;white-space:pre;-webkit-text-stroke:0.25px currentColor;transform:scaleX(1.0106);transform-origin:0 0;">Help</div>
<div style="position:absolute;left:1168px;top:41px;width:19px;height:2px;background:#bbbbbb;"></div>
<div style="position:absolute;left:1281px;top:12.16px;height:32px;line-height:32px;font-size:25.5px;color:#8e8e8e;font-family:'Liberation Sans', sans-serif;white-space:pre;-webkit-text-stroke:0.25px currentColor;transform:scaleX(1.0610);transform-origin:0 0;">thinking-in-spring</div>
<div style="position:absolute;left:2612px;top:28px;width:20px;height:2px;background:#c0c0c0;"></div>
<div style="position:absolute;left:2706px;top:18px;width:20px;height:20px;background:transparent;border:2px solid #c0c0c0;box-sizing:border-box;"></div>
<svg style="position:absolute;left:2800px;top:18px;" width="20" height="20" viewBox="0 0 20 20"><path d="M1,1 L19,19 M19,1 L1,19" stroke="#c0c0c0" stroke-width="2.2"/></svg>
<div style="position:absolute;left:-2px;top:69.16px;height:32px;line-height:32px;font-size:25.5px;color:#bbbbbb;font-family:'Liberation Sans', sans-serif;white-space:pre;-webkit-text-stroke:0.25px currentColor;transform:scaleX(1.0153);transform-origin:0 0;">ringframework</div>
<svg style="position:absolute;left:171px;top:71px;" width="12" height="28" viewBox="0 0 12 28"><path d="M1,1 L10,14 L1,27" fill="none" stroke="#5a5d5f" stroke-width="2"/></svg>
<div style="position:absolute;left:197px;top:69.16px;height:32px;line-height:32px;font-size:25.5px;color:#bbbbbb;font-family:'Liberation Sans', sans-serif;white-space:pre;-webkit-text-stroke:0.25px currentColor;transform:scaleX(0.9500);transform-origin:0 0;">beans</div>
<svg style="position:absolute;left:272px;top:71px;" width="12" height="28" viewBox="0 0 12 28"><path d="M1,1 L10,14 L1,27" fill="none" stroke="#5a5d5f" stroke-width="2"/></svg>
<div style="position:absolute;left:296px;top:69.16px;height:32px;line-height:32px;font-size:25.5px;color:#bbbbbb;font-family:'Liberation Sans', sans-serif;white-space:pre;-webkit-text-stroke:0.25px currentColor;transform:scaleX(1.0193);transform-origin:0 0;">factory</div>
<svg style="position:absolute;left:383px;top:71px;" width="12" height="28" viewBox="0 0 12 28"><path d="M1,1 L10,14 L1,27" fill="none" stroke="#5a5d5f" stroke-width="2"/></svg>
<div style="position:absolute;left:408px;top:69.16px;height:32px;line-height:32px;font-size:25.5px;color:#bbbbbb;font-family:'Liberation Sans', sans-serif;white-space:pre;-webkit-text-stroke:0.25px currentColor;transform:scaleX(1.0412);transform-origin:0 0;">annotation</div>
<svg style="position:absolute;left:541px;top:71px;" width="12" height="28" viewBox="0 0 12 28"><path d="M1,1 L10,14 L1,27" fill="none" stroke="#5a5d5f" stroke-width="2"/></svg>
<svg style="position:absolute;left:562px;top:71px;" width="28" height="28" viewBox="0 0 28 28"><circle cx="14" cy="14" r="14" fill="#3d8ca8"/><path d="M18.3,10.4 A5.6,5.6 0 1 0 18.3,17.6" fill="none" stroke="#1f2d33" stroke-width="2.1"/></svg>
<div style="position:absolute;left:599px;top:69.16px;height:32px;line-height:32px;font-size:25.5px;color:#bbbbbb;font-family:'Liberation Sans', sans-serif;white-space:pre;-webkit-text-stroke:0.25px currentColor;transform:scaleX(1.0061);transform-origin:0 0;">InitDestroyAnnotationBeanPostProcessor</div>
<svg style="position:absolute;left:1080px;top:71px;" width="12" height="28" viewBox="0 0 12 28"><path d="M1,1 L10,14 L1,27" fill="none" stroke="#5a5d5f" stroke-width="2"/></svg>
<svg style="position:absolute;left:1100px;top:71px;" width="28" height="28" viewBox="0 0 28 28"><circle cx="14" cy="14" r="14" fill="#3d8ca8"/><path d="M18.3,10.4 A5.6,5.6 0 1 0 18.3,17.6" fill="none" stroke="#1f2d33" stroke-width="2.1"/></svg>
<div style="position:absolute;left:1136px;top:69.16px;height:32px;line-height:32px;font-size:25.5px;color:#bbbbbb;font-family:'Liberation Sans', sans-serif;white-space:pre;-webkit-text-stroke:0.25px currentColor;transform:scaleX(0.9975);transform-origin:0 0;">LifecycleMetadata</div>
<svg style="position:absolute;left:1350px;top:71px;" width="12" height="28" viewBox="0 0 12 28"><path d="M1,1 L10,14 L1,27" fill="none" stroke="#5a5d5f" stroke-width="2"/></svg>
<svg style="position:absolute;left:1369px;top:71px;" width="28" height="28" viewBox="0 0 28 28"><circle cx="14" cy="14" r="14" fill="#b4636e"/><text x="14" y="19.5" text-anchor="middle" font-family="Liberation Sans" font-size="17" fill="#2b1d25">m</text></svg>
<div style="position:absolute;left:1404px;top:69.16px;height:32px;line-height:32px;font-size:25.5px;color:#bbbbbb;font-family:'Liberation Sans', sans-serif;white-space:pre;-webkit-text-stroke:0.25px currentColor;transform:scaleX(1.0559);transform-origin:0 0;">invokeInitMethods</div>
<div style="position:absolute;left:756px;top:116px;width:432px;height:52px;background:#45443e;"></div>
<div style="position:absolute;left:1530px;top:116px;width:604px;height:52px;background:#45443e;"></div>
<div style="position:absolute;left:2134px;top:116px;width:623px;height:48px;background:#4e4a3e;"></div>
<div style="position:absolute;left:2134px;top:164px;width:623px;height:6px;background:#4a88c7;"></div>
<div style="position:absolute;left:756px;top:116px;width:432px;height:52px;overflow:hidden;">
<div style="position:absolute;left:-16.80739733561478px;top:11.16px;height:32px;line-height:32px;font-size:25.5px;color:#bbbbbb;font-family:'Liberation Sans', sans-serif;white-space:pre;-webkit-text-stroke:0.25px currentColor;transform:scaleX(1.0027);transform-origin:0 0;">AnnotationBeanPostProcessor.java</div>
</div>
<svg style="position:absolute;left:1157px;top:134px;" width="16" height="16" viewBox="0 0 16 16"><path d="M1,1 L15,15 M15,1 L1,15" stroke="#6e7375" stroke-width="2.2"/></svg>
<svg style="position:absolute;left:1204px;top:130px;" width="28" height="28" viewBox="0 0 28 28"><circle cx="14" cy="14" r="14" fill="#3d8ca8"/><path d="M18.3,10.4 A5.6,5.6 0 1 0 18.3,17.6" fill="none" stroke="#1f2d33" stroke-width="2.1"/></svg>
<div style="position:absolute;left:1242.5px;top:127.16px;height:32px;line-height:32px;font-size:25.5px;color:#bbbbbb;font-family:'Liberation Sans', sans-serif;white-space:pre;-webkit-text-stroke:0.25px currentColor;transform:scaleX(0.9613);transform-origin:0 0;">UserFactoryBean.java</div>
<svg style="position:absolute;left:1500px;top:134px;" width="16" height="16" viewBox="0 0 16 16"><path d="M1,1 L15,15 M15,1 L1,15" stroke="#6e7375" stroke-width="2.2"/></svg>
<svg style="position:absolute;left:1550px;top:130px;" width="28" height="28" viewBox="0 0 28 28"><circle cx="14" cy="14" r="14" fill="#3d8ca8"/><path d="M18.3,10.4 A5.6,5.6 0 1 0 18.3,17.6" fill="none" stroke="#1f2d33" stroke-width="2.1"/><path d="M22.6,22.5 V19.2 A2.6,2.6 0 0 1 27.8,19.2 V22.5" fill="none" stroke="#a9b1b6" stroke-width="2"/><rect x="20" y="21.5" width="10.5" height="9" fill="#a9b1b6"/></svg>
<div style="position:absolute;left:1586px;top:127.16px;height:32px;line-height:32px;font-size:25.5px;color:#bbbbbb;font-family:'Liberation Sans', sans-serif;white-space:pre;-webkit-text-stroke:0.25px currentColor;transform:scaleX(0.9977);transform-origin:0 0;">CommonAnnotationBeanPostProcessor.java</div>
<svg style="position:absolute;left:2104px;top:134px;" width="16" height="16" viewBox="0 0 16 16"><path d="M1,1 L15,15 M15,1 L1,15" stroke="#6e7375" stroke-width="2.2"/></svg>
<svg style="position:absolute;left:2152px;top:130px;" width="28" height="28" viewBox="0 0 28 28"><circle cx="14" cy="14" r="14" fill="#3d8ca8"/><path d="M18.3,10.4 A5.6,5.6 0 1 0 18.3,17.6" fill="none" stroke="#1f2d33" stroke-width="2.1"/><path d="M22.6,22.5 V19.2 A2.6,2.6 0 0 1 27.8,19.2 V22.5" fill="none" stroke="#a9b1b6" stroke-width="2"/><rect x="20" y="21.5" width="10.5" height="9" fill="#a9b1b6"/></svg>
<div style="position:absolute;left:2191px;top:127.16px;height:32px;line-height:32px;font-size:25.5px;color:#c8c8c8;font-family:'Liberation Sans', sans-serif;white-space:pre;-webkit-text-stroke:0.25px currentColor;transform:scaleX(1.0008);transform-origin:0 0;">InitDestroyAnnotationBeanPostProcessor.java</div>
<svg style="position:absolute;left:2728px;top:134px;" width="16" height="16" viewBox="0 0 16 16"><path d="M1,1 L15,15 M15,1 L1,15" stroke="#6e7375" stroke-width="2.2"/></svg>
<svg style="position:absolute;left:2776px;top:134px;" width="22" height="14" viewBox="0 0 22 14"><path d="M2,2 L11,11 L20,2" fill="none" stroke="#b0b0b0" stroke-width="2.6"/></svg>
<svg style="position:absolute;left:1664px;top:66px;" width="36" height="36" viewBox="0 0 36 36"><path d="M3,10 L13,2 L22,9 L17,13 L14,11 L10,14 Z" fill="#59a869"/><path d="M14,12 L33,31" stroke="#59a869" stroke-width="5.5" stroke-linecap="butt"/></svg>
<div style="position:absolute;left:1720px;top:64px;width:365px;height:44px;background:transparent;border:2px solid #5e6163;border-radius:5px;box-sizing:border-box;"></div>
<svg style="position:absolute;left:1735px;top:72px;" width="30" height="28" viewBox="0 0 30 28"><rect x="6" y="1" width="22" height="19" fill="none" stroke="#6e7173" stroke-width="2"/><rect x="1" y="6" width="22" height="20" fill="#3c3f41" stroke="#6e7173" stroke-width="2"/><rect x="4" y="11" width="16" height="12" fill="#3b6e86"/></svg>
<div style="position:absolute;left:1775px;top:71.16px;height:32px;line-height:32px;font-size:25.5px;color:#bbbbbb;font-family:'Liberation Sans', sans-serif;white-space:pre;-webkit-text-stroke:0.25px currentColor;transform:scaleX(1.0046);transform-origin:0 0;">BeanInitializationDemo</div>
<svg style="position:absolute;left:2052px;top:80px;" width="18" height="10" viewBox="0 0 18 10"><polygon points="0,0 18,0 9,10" fill="#b0b0b0"/></svg>
<svg style="position:absolute;left:2114px;top:74px;" width="20" height="24" viewBox="0 0 20 24"><polygon points="0,0 20,12 0,24" fill="#499c54"/></svg>
<svg style="position:absolute;left:2162px;top:72px;" width="24" height="29" viewBox="0 0 24 29"><path d="M6,0 L11,5 M18,0 L13,5" stroke="#499c54" stroke-width="3"/><path d="M4,5 H20 V20 C20,25 16,28 12,28 C8,28 4,25 4,20 Z" fill="#499c54"/><rect x="0" y="9" width="24" height="3" fill="#499c54"/><rect x="0" y="15.5" width="24" height="3" fill="#499c54"/><rect x="0" y="22" width="24" height="3" fill="#499c54"/><rect x="8" y="11.5" width="8" height="3.2" fill="#3c3f41"/><rect x="8" y="18.5" width="8" height="3" fill="#3c3f41"/></svg>
<svg style="position:absolute;left:2212px;top:74px;" width="31" height="29" viewBox="0 0 31 29"><path d="M0,3 L10,0 L20,3 V10 H16 V5.5 L10,4 L4,5.5 V15 C4,19 7,21.5 10,23 L10,24 C5,22 0,19 0,13 Z" fill="#b4b4b4"/><path d="M10,0 V24 L9,24 V6 Z" fill="#b4b4b4"/><path d="M0,3 L10,0 V24 C5,22 0,19 0,13 Z" fill="#b4b4b4"/><polygon points="16,10 30,19 16,28" fill="#499c54"/></svg>
<svg style="position:absolute;left:2265px;top:72px;" width="62" height="31" viewBox="0 0 62 31"><path d="M19,21 A11.5,11.5 0 1 1 23.5,8" fill="none" stroke="#b4b4b4" stroke-width="2.6"/><path d="M12.5,6 V13 L9,17.5" fill="none" stroke="#b4b4b4" stroke-width="2.4"/><polygon points="16,12 31,21 16,30" fill="#d0494a"/><polygon points="43,12 59,12 51,20" fill="#b4b4b4"/></svg>
<div style="position:absolute;left:2350px;top:76px;width:20px;height:20px;background:#5a5a5a;"></div>
<div style="position:absolute;left:2392px;top:66px;width:2px;height:40px;background:#515151;"></div>
<div style="position:absolute;left:2412px;top:70.16px;height:32px;line-height:32px;font-size:25.5px;color:#bbbbbb;font-family:'Liberation Sans', sans-serif;white-space:pre;-webkit-text-stroke:0.25px currentColor;transform:scaleX(0.9831);transform-origin:0 0;">Git:</div>
<svg style="position:absolute;left:2478px;top:71px;" width="26" height="28" viewBox="0 0 26 28"><path d="M23,2 L5,22" stroke="#3592c4" stroke-width="3.5"/><polygon points="2,10 2,26 18,26" fill="#3592c4"/></svg>
<svg style="position:absolute;left:2526px;top:72px;" width="30" height="24" viewBox="0 0 30 24"><path d="M2,12 L10,21 L28,2" fill="none" stroke="#499c54" stroke-width="4.5"/></svg>
<svg style="position:absolute;left:2577px;top:70px;" width="26" height="28" viewBox="0 0 26 28"><circle cx="13" cy="14" r="11" fill="none" stroke="#5b5e60" stroke-width="2.8"/><path d="M13,7 V14 L18,18" fill="none" stroke="#5b5e60" stroke-width="2.5"/></svg>
<svg style="position:absolute;left:2629px;top:70px;" width="28" height="28" viewBox="0 0 28 28"><path d="M8,8 H17 A8,8 0 0 1 17,24 H8" fill="none" stroke="#bbbbbb" stroke-width="2.8"/><polygon points="1,8 10,1 10,15" fill="#bbbbbb"/></svg>
<div style="position:absolute;left:2676px;top:66px;width:2px;height:40px;background:#515151;"></div>
<svg style="position:absolute;left:2696px;top:76px;" width="30" height="25" viewBox="0 0 30 25"><path d="M0,0 H10 L13,4 H28 V9 H20 V16 H14 V20 H0 Z" fill="#b4b4b4"/><rect x="21.5" y="9.5" width="6.5" height="6.5" fill="#3592c4"/><rect x="14" y="17.5" width="6.5" height="6.5" fill="#3592c4"/><rect x="21.5" y="17.5" width="6.5" height="6.5" fill="#3592c4"/></svg>
<div style="position:absolute;left:2742px;top:66px;width:2px;height:40px;background:#515151;"></div>
<svg style="position:absolute;left:2762px;top:74px;" width="28" height="25" viewBox="0 0 28 25"><rect x="1.2" y="1.2" width="25.6" height="22.6" fill="none" stroke="#b4b4b4" stroke-width="2.4"/><rect x="1.2" y="1.2" width="25.6" height="5" fill="#b4b4b4"/><polygon points="6,9.5 16,14.5 6,19.5" fill="#499c54"/></svg>
<svg style="position:absolute;left:2814px;top:72px;" width="30" height="30" viewBox="0 0 30 30"><circle cx="11" cy="11" r="9" fill="none" stroke="#b4b4b4" stroke-width="3"/><path d="M17.5,17.5 L27,27" stroke="#b4b4b4" stroke-width="3.6"/></svg>
<svg style="position:absolute;left:64px;top:130px;" width="28" height="26" viewBox="0 0 28 26"><rect x="1.5" y="1.5" width="25" height="23" fill="none" stroke="#8e9498" stroke-width="3"/><rect x="5" y="7" width="18" height="15" fill="#3b8fb8"/></svg>
<div style="position:absolute;left:103px;top:127.66px;height:32px;line-height:32px;font-size:25.5px;color:#bbbbbb;font-family:'Liberation Sans', sans-serif;white-space:pre;-webkit-text-stroke:0.25px currentColor;transform:scaleX(0.9829);transform-origin:0 0;">Project</div>
<svg style="position:absolute;left:199px;top:139px;" width="18" height="10" viewBox="0 0 18 10"><polygon points="0,0 18,0 9,10" fill="#b0b0b0"/></svg>
<svg style="position:absolute;left:546px;top:127.5px;" width="29" height="29" viewBox="0 0 29 29"><circle cx="14.5" cy="14.5" r="12" fill="none" stroke="#b0b0b0" stroke-width="3"/><path d="M14.5,2 V11 M14.5,18 V27 M2,14.5 H11 M18,14.5 H27" stroke="#b0b0b0" stroke-width="3"/></svg>
<svg style="position:absolute;left:600px;top:126.5px;" width="25" height="30" viewBox="0 0 25 30"><path d="M0,15 H25" stroke="#b0b0b0" stroke-width="3"/><polygon points="6,1 19,1 12.5,10" fill="#b0b0b0"/><polygon points="6,29 19,29 12.5,20" fill="#b0b0b0"/></svg>
<div style="position:absolute;left:644px;top:122px;width:2px;height:40px;background:#515151;"></div>
<svg style="position:absolute;left:664px;top:128.5px;" width="27" height="27" viewBox="0 0 27 27"><circle cx="13.5" cy="13.5" r="10" fill="#b0b0b0"/><rect x="10.5" y="0" width="6" height="27" fill="#b0b0b0" transform="rotate(0 13.5 13.5)"/><rect x="10.5" y="0" width="6" height="27" fill="#b0b0b0" transform="rotate(45 13.5 13.5)"/><rect x="10.5" y="0" width="6" height="27" fill="#b0b0b0" transform="rotate(90 13.5 13.5)"/><rect x="10.5" y="0" width="6" height="27" fill="#b0b0b0" transform="rotate(135 13.5 13.5)"/><circle cx="13.5" cy="13.5" r="4.6" fill="#3c3f41"/></svg>
<div style="position:absolute;left:717px;top:140px;width:25px;height:4px;background:#b0b0b0;"></div>
<div style="position:absolute;left:46px;top:169px;width:710px;height:1437px;overflow:hidden;">
<div style="position:absolute;left:0px;top:381px;width:710px;height:40px;background:#0d293e;"></div>
<div style="position:absolute;left:0px;top:781px;width:710px;height:40px;background:#4a473d;"></div>
<svg style="position:absolute;left:222px;top:-8px;overflow:visible" width="18" height="16" viewBox="0 0 18 16"><polygon points="0,0 18,0 9,16" fill="#a9a9a9"/></svg>
<svg style="position:absolute;left:257px;top:-10px;overflow:visible" width="29" height="23" viewBox="0 0 29 23"><path d="M0,0 H10 L13,4 H28 V22 H0 Z" fill="#87939a"/><circle cx="14" cy="13" r="3.5" fill="#3c3f41"/></svg>
<div style="position:absolute;left:294px;top:-16.34px;height:32px;line-height:32px;font-size:25.5px;color:#bbbbbb;font-family:'Liberation Sans', sans-serif;white-space:pre;-webkit-text-stroke:0.25px currentColor;">definition</div>
<svg style="position:absolute;left:294px;top:27px;overflow:visible" width="28" height="28" viewBox="0 0 28 28"><circle cx="14" cy="14" r="14" fill="#3d8ca8"/><path d="M18.3,10.4 A5.6,5.6 0 1 0 18.3,17.6" fill="none" stroke="#1f2d33" stroke-width="2.1"/><polygon points="20,-2 30,5 20,12" fill="#59b23f"/></svg>
<div style="position:absolute;left:330px;top:23.66px;height:32px;line-height:32px;font-size:25.5px;color:#bbbbbb;font-family:'Liberation Sans', sans-serif;white-space:pre;-webkit-text-stroke:0.25px currentColor;transform:scaleX(1.0273);transform-origin:0 0;">AnnotationBeanDefinitionDemo</div>
<svg style="position:absolute;left:294px;top:67px;overflow:visible" width="28" height="28" viewBox="0 0 28 28"><circle cx="14" cy="14" r="14" fill="#3d8ca8"/><path d="M18.3,10.4 A5.6,5.6 0 1 0 18.3,17.6" fill="none" stroke="#1f2d33" stroke-width="2.1"/><polygon points="20,-2 30,5 20,12" fill="#59b23f"/></svg>
<div style="position:absolute;left:330px;top:63.66px;height:32px;line-height:32px;font-size:25.5px;color:#bbbbbb;font-family:'Liberation Sans', sans-serif;white-space:pre;-webkit-text-stroke:0.25px currentColor;transform:scaleX(0.9752);transform-origin:0 0;">BeanAliasDemo</div>
<svg style="position:absolute;left:294px;top:107px;overflow:visible" width="28" height="28" viewBox="0 0 28 28"><circle cx="14" cy="14" r="14" fill="#3d8ca8"/><path d="M18.3,10.4 A5.6,5.6 0 1 0 18.3,17.6" fill="none" stroke="#1f2d33" stroke-width="2.1"/><polygon points="20,-2 30,5 20,12" fill="#59b23f"/></svg>
<div style="position:absolute;left:330px;top:103.66px;height:32px;line-height:32px;font-size:25.5px;color:#bbbbbb;font-family:'Liberation Sans', sans-serif;white-space:pre;-webkit-text-stroke:0.25px currentColor;transform:scaleX(1.0120);transform-origin:0 0;">BeanDefinitionCreationDemo</div>
<svg style="position:absolute;left:294px;top:147px;overflow:visible" width="28" height="28" viewBox="0 0 28 28"><circle cx="14" cy="14" r="14" fill="#3d8ca8"/><path d="M18.3,10.4 A5.6,5.6 0 1 0 18.3,17.6" fill="none" stroke="#1f2d33" stroke-width="2.1"/><polygon points="20,-2 30,5 20,12" fill="#59b23f"/></svg>
<div style="position:absolute;left:330px;top:143.66px;height:32px;line-height:32px;font-size:25.5px;color:#bbbbbb;font-family:'Liberation Sans', sans-serif;white-space:pre;-webkit-text-stroke:0.25px currentColor;transform:scaleX(0.9918);transform-origin:0 0;">BeanGarbageCollectionDemo</div>
<svg style="position:absolute;left:294px;top:187px;overflow:visible" width="28" height="28" viewBox="0 0 28 28"><circle cx="14" cy="14" r="14" fill="#3d8ca8"/><path d="M18.3,10.4 A5.6,5.6 0 1 0 18.3,17.6" fill="none" stroke="#1f2d33" stroke-width="2.1"/><polygon points="20,-2 30,5 20,12" fill="#59b23f"/></svg>
<div style="position:absolute;left:330px;top:183.66px;height:32px;line-height:32px;font-size:25.5px;color:#6a9fd2;font-family:'Liberation Sans', sans-serif;white-space:pre;-webkit-text-stroke:0.25px currentColor;transform:scaleX(1.0096);transform-origin:0 0;">BeanInitializationDemo</div>
<svg style="position:absolute;left:294px;top:227px;overflow:visible" width="28" height="28" viewBox="0 0 28 28"><circle cx="14" cy="14" r="14" fill="#3d8ca8"/><path d="M18.3,10.4 A5.6,5.6 0 1 0 18.3,17.6" fill="none" stroke="#1f2d33" stroke-width="2.1"/><polygon points="20,-2 30,5 20,12" fill="#59b23f"/></svg>
<div style="position:absolute;left:330px;top:223.66px;height:32px;line-height:32px;font-size:25.5px;color:#bbbbbb;font-family:'Liberation Sans', sans-serif;white-space:pre;-webkit-text-stroke:0.25px currentColor;transform:scaleX(1.0126);transform-origin:0 0;">BeanInstantiationDemo</div>
<svg style="position:absolute;left:294px;top:267px;overflow:visible" width="28" height="28" viewBox="0 0 28 28"><circle cx="14" cy="14" r="14" fill="#3d8ca8"/><path d="M18.3,10.4 A5.6,5.6 0 1 0 18.3,17.6" fill="none" stroke="#1f2d33" stroke-width="2.1"/><polygon points="20,-2 30,5 20,12" fill="#59b23f"/></svg>
<div style="position:absolute;left:330px;top:263.66px;height:32px;line-height:32px;font-size:25.5px;color:#bbbbbb;font-family:'Liberation Sans', sans-serif;white-space:pre;-webkit-text-stroke:0.25px currentColor;transform:scaleX(1.0069);transform-origin:0 0;">SingletonBeanRegistrationDemo</div>
<svg style="position:absolute;left:294px;top:307px;overflow:visible" width="28" height="28" viewBox="0 0 28 28"><circle cx="14" cy="14" r="14" fill="#3d8ca8"/><path d="M18.3,10.4 A5.6,5.6 0 1 0 18.3,17.6" fill="none" stroke="#1f2d33" stroke-width="2.1"/><polygon points="20,-2 30,5 20,12" fill="#59b23f"/></svg>
<div style="position:absolute;left:330px;top:303.66px;height:32px;line-height:32px;font-size:25.5px;color:#bbbbbb;font-family:'Liberation Sans', sans-serif;white-space:pre;-webkit-text-stroke:0.25px currentColor;transform:scaleX(0.9986);transform-origin:0 0;">SpecialBeanInstantiationDemo</div>
<svg style="position:absolute;left:222px;top:352px;overflow:visible" width="18" height="16" viewBox="0 0 18 16"><polygon points="0,0 18,0 9,16" fill="#a9a9a9"/></svg>
<svg style="position:absolute;left:257px;top:350px;overflow:visible" width="29" height="23" viewBox="0 0 29 23"><path d="M0,0 H10 L13,4 H28 V22 H0 Z" fill="#87939a"/><circle cx="14" cy="13" r="3.5" fill="#3c3f41"/></svg>
<div style="position:absolute;left:294px;top:343.66px;height:32px;line-height:32px;font-size:25.5px;color:#bbbbbb;font-family:'Liberation Sans', sans-serif;white-space:pre;-webkit-text-stroke:0.25px currentColor;transform:scaleX(1.0141);transform-origin:0 0;">factory</div>
<svg style="position:absolute;left:294px;top:387px;overflow:visible" width="28" height="28" viewBox="0 0 28 28"><circle cx="14" cy="14" r="14" fill="#3d8ca8"/><path d="M18.3,10.4 A5.6,5.6 0 1 0 18.3,17.6" fill="none" stroke="#1f2d33" stroke-width="2.1"/></svg>
<div style="position:absolute;left:330px;top:383.66px;height:32px;line-height:32px;font-size:25.5px;color:#6a9fd2;font-family:'Liberation Sans', sans-serif;white-space:pre;-webkit-text-stroke:0.25px currentColor;transform:scaleX(0.9916);transform-origin:0 0;">DefaultUserFactory</div>
<svg style="position:absolute;left:294px;top:427px;overflow:visible" width="28" height="28" viewBox="0 0 28 28"><circle cx="14" cy="14" r="14" fill="#5d9b47"/><path d="M10.5,8 H17.5 M14,8 V20 M10.5,20 H17.5" fill="none" stroke="#1e2b1a" stroke-width="2"/></svg>
<div style="position:absolute;left:330px;top:423.66px;height:32px;line-height:32px;font-size:25.5px;color:#bbbbbb;font-family:'Liberation Sans', sans-serif;white-space:pre;-webkit-text-stroke:0.25px currentColor;transform:scaleX(0.9723);transform-origin:0 0;">UserFactory</div>
<svg style="position:absolute;left:294px;top:467px;overflow:visible" width="28" height="28" viewBox="0 0 28 28"><circle cx="14" cy="14" r="14" fill="#3d8ca8"/><path d="M18.3,10.4 A5.6,5.6 0 1 0 18.3,17.6" fill="none" stroke="#1f2d33" stroke-width="2.1"/></svg>
<div style="position:absolute;left:330px;top:463.66px;height:32px;line-height:32px;font-size:25.5px;color:#bbbbbb;font-family:'Liberation Sans', sans-serif;white-space:pre;-webkit-text-stroke:0.25px currentColor;transform:scaleX(0.9662);transform-origin:0 0;">UserFactoryBean</div>
<svg style="position:absolute;left:150px;top:512px;overflow:visible" width="18" height="16" viewBox="0 0 18 16"><polygon points="0,0 18,0 9,16" fill="#a9a9a9"/></svg>
<svg style="position:absolute;left:186px;top:510px;overflow:visible" width="29" height="23" viewBox="0 0 29 23"><path d="M0,0 H10 L13,4 H28 V22 H0 Z" fill="#87939a"/><rect x="17" y="12" width="13" height="17" fill="#3c3f41"/><path d="M18,15 H30 M18,19 H30 M18,23 H30 M18,27 H30" stroke="#f4af3d" stroke-width="2.2"/></svg>
<div style="position:absolute;left:222px;top:503.66px;height:32px;line-height:32px;font-size:25.5px;color:#bbbbbb;font-family:'Liberation Sans', sans-serif;white-space:pre;-webkit-text-stroke:0.25px currentColor;transform:scaleX(0.9754);transform-origin:0 0;">resources</div>
<svg style="position:absolute;left:186px;top:552px;overflow:visible" width="18" height="16" viewBox="0 0 18 16"><polygon points="0,0 18,0 9,16" fill="#a9a9a9"/></svg>
<svg style="position:absolute;left:222px;top:550px;overflow:visible" width="29" height="23" viewBox="0 0 29 23"><path d="M0,0 H10 L13,4 H28 V22 H0 Z" fill="#87939a"/></svg>
<div style="position:absolute;left:259px;top:543.66px;height:32px;line-height:32px;font-size:25.5px;color:#bbbbbb;font-family:'Liberation Sans', sans-serif;white-space:pre;-webkit-text-stroke:0.25px currentColor;transform:scaleX(0.9729);transform-origin:0 0;">META-INF</div>
<svg style="position:absolute;left:222px;top:592px;overflow:visible" width="16" height="18" viewBox="0 0 16 18"><polygon points="0,0 16,9 0,18" fill="#a9a9a9"/></svg>
<svg style="position:absolute;left:258px;top:590px;overflow:visible" width="29" height="23" viewBox="0 0 29 23"><path d="M0,0 H10 L13,4 H28 V22 H0 Z" fill="#87939a"/></svg>
<div style="position:absolute;left:294px;top:583.66px;height:32px;line-height:32px;font-size:25.5px;color:#bbbbbb;font-family:'Liberation Sans', sans-serif;white-space:pre;-webkit-text-stroke:0.25px currentColor;transform:scaleX(0.9506);transform-origin:0 0;">services</div>
<svg style="position:absolute;left:257px;top:625px;overflow:visible" width="32" height="32" viewBox="0 0 32 32"><path d="M4,0 H24 V15 H4 V8 L11,0 Z" fill="#87939a"/><path d="M4,7 L10,1 V7 Z" fill="#3c3f41"/><rect x="0" y="17" width="27" height="14" fill="#c75b2a"/><path d="M9,20 L4,24 L9,28" fill="none" stroke="#2b2b2b" stroke-width="1.8"/><path d="M13,31 C13,22 20,17 31,17 C31,27 24,32 13,31 Z" fill="#5a9e3c"/><path d="M15,29 C19,25 23,22 28,20" stroke="#3c3f41" stroke-width="1.2" fill="none"/></svg>
<div style="position:absolute;left:294px;top:623.66px;height:32px;line-height:32px;font-size:25.5px;color:#bbbbbb;font-family:'Liberation Sans', sans-serif;white-space:pre;-webkit-text-stroke:0.25px currentColor;transform:scaleX(1.0337);transform-origin:0 0;">bean-deginitions-context.xml</div>
<svg style="position:absolute;left:257px;top:665px;overflow:visible" width="32" height="32" viewBox="0 0 32 32"><path d="M4,0 H24 V15 H4 V8 L11,0 Z" fill="#87939a"/><path d="M4,7 L10,1 V7 Z" fill="#3c3f41"/><rect x="0" y="17" width="27" height="14" fill="#c75b2a"/><path d="M9,20 L4,24 L9,28" fill="none" stroke="#2b2b2b" stroke-width="1.8"/><path d="M13,31 C13,22 20,17 31,17 C31,27 24,32 13,31 Z" fill="#5a9e3c"/><path d="M15,29 C19,25 23,22 28,20" stroke="#3c3f41" stroke-width="1.2" fill="none"/></svg>
<div style="position:absolute;left:294px;top:663.66px;height:32px;line-height:32px;font-size:25.5px;color:#bbbbbb;font-family:'Liberation Sans', sans-serif;white-space:pre;-webkit-text-stroke:0.25px currentColor;transform:scaleX(1.0324);transform-origin:0 0;">bean-instantiation-context.xml</div>
<svg style="position:absolute;left:257px;top:705px;overflow:visible" width="32" height="32" viewBox="0 0 32 32"><path d="M4,0 H24 V15 H4 V8 L11,0 Z" fill="#87939a"/><path d="M4,7 L10,1 V7 Z" fill="#3c3f41"/><rect x="0" y="17" width="27" height="14" fill="#c75b2a"/><path d="M9,20 L4,24 L9,28" fill="none" stroke="#2b2b2b" stroke-width="1.8"/><path d="M13,31 C13,22 20,17 31,17 C31,27 24,32 13,31 Z" fill="#5a9e3c"/><path d="M15,29 C19,25 23,22 28,20" stroke="#3c3f41" stroke-width="1.2" fill="none"/></svg>
<div style="position:absolute;left:294px;top:703.66px;height:32px;line-height:32px;font-size:25.5px;color:#bbbbbb;font-family:'Liberation Sans', sans-serif;white-space:pre;-webkit-text-stroke:0.25px currentColor;transform:scaleX(1.0300);transform-origin:0 0;">special-bean-instantiation-context.xml</div>
<svg style="position:absolute;left:114px;top:752px;overflow:visible" width="16" height="18" viewBox="0 0 16 18"><polygon points="0,0 16,9 0,18" fill="#a9a9a9"/></svg>
<svg style="position:absolute;left:150px;top:750px;overflow:visible" width="29" height="23" viewBox="0 0 29 23"><path d="M0,0 H10 L13,4 H28 V22 H0 Z" fill="#87939a"/></svg>
<div style="position:absolute;left:186.5px;top:743.66px;height:32px;line-height:32px;font-size:25.5px;color:#bbbbbb;font-family:'Liberation Sans', sans-serif;white-space:pre;-webkit-text-stroke:0.25px currentColor;transform:scaleX(1.0195);transform-origin:0 0;">test</div>
<svg style="position:absolute;left:78px;top:792px;overflow:visible" width="16" height="18" viewBox="0 0 16 18"><polygon points="0,0 16,9 0,18" fill="#a9a9a9"/></svg>
<svg style="position:absolute;left:114px;top:790px;overflow:visible" width="29" height="23" viewBox="0 0 29 23"><path d="M0,0 H10 L13,4 H28 V22 H0 Z" fill="#c8652f"/></svg>
<div style="position:absolute;left:151px;top:783.66px;height:32px;line-height:32px;font-size:25.5px;color:#bbbbbb;font-family:'Liberation Sans', sans-serif;white-space:pre;-webkit-text-stroke:0.25px currentColor;transform:scaleX(1.0322);transform-origin:0 0;">target</div>
<div style="position:absolute;left:111px;top:819px;font-family:'Liberation Sans',sans-serif;font-style:italic;font-weight:bold;font-size:34px;line-height:40px;color:#3a9ac4;">m</div>
<div style="position:absolute;left:151px;top:823.66px;height:32px;line-height:32px;font-size:25.5px;color:#bbbbbb;font-family:'Liberation Sans', sans-serif;white-space:pre;-webkit-text-stroke:0.25px currentColor;transform:scaleX(1.0016);transform-origin:0 0;">pom.xml</div>
<svg style="position:absolute;left:118px;top:867px;overflow:visible" width="28" height="30" viewBox="0 0 28 30"><path d="M6,0 H20 V20 H6 Z" fill="#87939a"/><path d="M0,8 L7,1 V8 Z" fill="#87939a"/><path d="M0,9 H6 V28 H0 Z" fill="#87939a"/><rect x="14" y="18" width="12" height="12" fill="#1f1f1f"/><rect x="16.5" y="25" width="6.5" height="2.2" fill="#fff"/></svg>
<div style="position:absolute;left:151px;top:863.66px;height:32px;line-height:32px;font-size:25.5px;color:#6a9fd2;font-family:'Liberation Sans', sans-serif;white-space:pre;-webkit-text-stroke:0.25px currentColor;transform:scaleX(1.0125);transform-origin:0 0;">spring-bean.iml</div>
<div style="position:absolute;left:75px;top:899px;font-family:'Liberation Sans',sans-serif;font-style:italic;font-weight:bold;font-size:34px;line-height:40px;color:#3a9ac4;">m</div>
<div style="position:absolute;left:115px;top:903.66px;height:32px;line-height:32px;font-size:25.5px;color:#6a9fd2;font-family:'Liberation Sans', sans-serif;white-space:pre;-webkit-text-stroke:0.25px currentColor;transform:scaleX(1.0016);transform-origin:0 0;">pom.xml</div>
<svg style="position:absolute;left:81px;top:947px;overflow:visible" width="28" height="30" viewBox="0 0 28 30"><path d="M6,0 H20 V20 H6 Z" fill="#87939a"/><path d="M0,8 L7,1 V8 Z" fill="#87939a"/><path d="M0,9 H6 V28 H0 Z" fill="#87939a"/><rect x="14" y="18" width="12" height="12" fill="#1f1f1f"/><rect x="16.5" y="25" width="6.5" height="2.2" fill="#fff"/></svg>
<div style="position:absolute;left:115px;top:943.66px;height:32px;line-height:32px;font-size:25.5px;color:#bbbbbb;font-family:'Liberation Sans', sans-serif;white-space:pre;-webkit-text-stroke:0.25px currentColor;transform:scaleX(1.0470);transform-origin:0 0;">thinking-in-spring.iml</div>
<svg style="position:absolute;left:6px;top:992px;overflow:visible" width="18" height="16" viewBox="0 0 18 16"><polygon points="0,0 18,0 9,16" fill="#a9a9a9"/></svg>
<svg style="position:absolute;left:42px;top:987px;overflow:visible" width="30" height="30" viewBox="0 0 30 30"><rect x="0" y="6" width="4" height="22" fill="#87939a"/><rect x="6.5" y="4" width="4" height="24" fill="#87939a"/><rect x="6.5" y="10" width="4" height="18" fill="#62b543"/><rect x="13" y="0" width="4" height="28" fill="#87939a"/><rect x="19.5" y="4" width="4" height="24" fill="#40b6e0"/><rect x="26" y="8" width="4" height="20" fill="#87939a"/></svg>
<div style="position:absolute;left:79px;top:983.66px;height:32px;line-height:32px;font-size:25.5px;color:#bbbbbb;font-family:'Liberation Sans', sans-serif;white-space:pre;-webkit-text-stroke:0.25px currentColor;transform:scaleX(0.9647);transform-origin:0 0;">External Libraries</div>
<svg style="position:absolute;left:42px;top:1032px;overflow:visible" width="16" height="18" viewBox="0 0 16 18"><polygon points="0,0 16,9 0,18" fill="#a9a9a9"/></svg>
<svg style="position:absolute;left:78px;top:1027px;overflow:visible" width="31" height="30" viewBox="0 0 31 30"><path d="M0,0 H10 L13,4 H28 V22 H0 Z" fill="#87939a"/><path d="M8,15 H26 V20 C26,26 22,29 17,29 C12,29 8,26 8,20 Z" fill="#40b6e0" stroke="#3c3f41" stroke-width="1.5"/><path d="M26,18 H29 V22 H26" fill="none" stroke="#40b6e0" stroke-width="2"/></svg>
<div style="position:absolute;left:116px;top:1023.66px;height:32px;line-height:32px;font-size:25.5px;color:#bbbbbb;font-family:'Liberation Sans', sans-serif;white-space:pre;-webkit-text-stroke:0.25px currentColor;transform:scaleX(0.9937);transform-origin:0 0;">&lt; 1.8 &gt;</div>
<div style="position:absolute;left:211px;top:1023.66px;height:32px;line-height:32px;font-size:25.5px;color:#808080;font-family:'Liberation Sans', sans-serif;white-space:pre;-webkit-text-stroke:0.25px currentColor;transform:scaleX(1.0410);transform-origin:0 0;">D:\worksprace\devtools\jdk\jdk</div>
<svg style="position:absolute;left:42px;top:1072px;overflow:visible" width="16" height="18" viewBox="0 0 16 18"><polygon points="0,0 16,9 0,18" fill="#a9a9a9"/></svg>
<svg style="position:absolute;left:78px;top:1067px;overflow:visible" width="31" height="30" viewBox="0 0 31 30"><path d="M0,0 H10 L13,4 H23 V24 H0 Z" fill="#87939a"/><rect x="13" y="8" width="17" height="21" fill="#3c3f41"/><rect x="14" y="14" width="4" height="14" fill="#62b543"/><rect x="20" y="10" width="4" height="18" fill="#87939a"/><rect x="26" y="14" width="4" height="14" fill="#40b6e0"/></svg>
<div style="position:absolute;left:116px;top:1063.66px;height:32px;line-height:32px;font-size:25.5px;color:#bbbbbb;font-family:'Liberation Sans', sans-serif;white-space:pre;-webkit-text-stroke:0.25px currentColor;transform:scaleX(0.9787);transform-origin:0 0;">Maven: javax.inject:javax.inject:1</div>
<svg style="position:absolute;left:42px;top:1112px;overflow:visible" width="16" height="18" viewBox="0 0 16 18"><polygon points="0,0 16,9 0,18" fill="#a9a9a9"/></svg>
<svg style="position:absolute;left:78px;top:1107px;overflow:visible" width="31" height="30" viewBox="0 0 31 30"><path d="M0,0 H10 L13,4 H23 V24 H0 Z" fill="#87939a"/><rect x="13" y="8" width="17" height="21" fill="#3c3f41"/><rect x="14" y="14" width="4" height="14" fill="#62b543"/><rect x="20" y="10" width="4" height="18" fill="#87939a"/><rect x="26" y="14" width="4" height="14" fill="#40b6e0"/></svg>
<div style="position:absolute;left:116px;top:1103.66px;height:32px;line-height:32px;font-size:25.5px;color:#bbbbbb;font-family:'Liberation Sans', sans-serif;white-space:pre;-webkit-text-stroke:0.25px currentColor;transform:scaleX(1.0124);transform-origin:0 0;">Maven: org.projectlombok:lombok:1.18.12</div>
<svg style="position:absolute;left:42px;top:1152px;overflow:visible" width="16" height="18" viewBox="0 0 16 18"><polygon points="0,0 16,9 0,18" fill="#a9a9a9"/></svg>
<svg style="position:absolute;left:78px;top:1147px;overflow:visible" width="31" height="30" viewBox="0 0 31 30"><path d="M0,0 H10 L13,4 H23 V24 H0 Z" fill="#87939a"/><rect x="13" y="8" width="17" height="21" fill="#3c3f41"/><rect x="14" y="14" width="4" height="14" fill="#62b543"/><rect x="20" y="10" width="4" height="18" fill="#87939a"/><rect x="26" y="14" width="4" height="14" fill="#40b6e0"/></svg>
<div style="position:absolute;left:116px;top:1143.66px;height:32px;line-height:32px;font-size:25.5px;color:#bbbbbb;font-family:'Liberation Sans', sans-serif;white-space:pre;-webkit-text-stroke:0.25px currentColor;transform:scaleX(0.9900);transform-origin:0 0;">Maven: org.springframework:spring-aop:5.2.2.RELEASE</div>
<svg style="position:absolute;left:42px;top:1192px;overflow:visible" width="16" height="18" viewBox="0 0 16 18"><polygon points="0,0 16,9 0,18" fill="#a9a9a9"/></svg>
<svg style="position:absolute;left:78px;top:1187px;overflow:visible" width="31" height="30" viewBox="0 0 31 30"><path d="M0,0 H10 L13,4 H23 V24 H0 Z" fill="#87939a"/><rect x="13" y="8" width="17" height="21" fill="#3c3f41"/><rect x="14" y="14" width="4" height="14" fill="#62b543"/><rect x="20" y="10" width="4" height="18" fill="#87939a"/><rect x="26" y="14" width="4" height="14" fill="#40b6e0"/></svg>
<div style="position:absolute;left:116px;top:1183.66px;height:32px;line-height:32px;font-size:25.5px;color:#bbbbbb;font-family:'Liberation Sans', sans-serif;white-space:pre;-webkit-text-stroke:0.25px currentColor;transform:scaleX(0.9900);transform-origin:0 0;">Maven: org.springframework:spring-beans:5.2.2.RELEASE</div>
<svg style="position:absolute;left:42px;top:1232px;overflow:visible" width="16" height="18" viewBox="0 0 16 18"><polygon points="0,0 16,9 0,18" fill="#a9a9a9"/></svg>
<svg style="position:absolute;left:78px;top:1227px;overflow:visible" width="31" height="30" viewBox="0 0 31 30"><path d="M0,0 H10 L13,4 H23 V24 H0 Z" fill="#87939a"/><rect x="13" y="8" width="17" height="21" fill="#3c3f41"/><rect x="14" y="14" width="4" height="14" fill="#62b543"/><rect x="20" y="10" width="4" height="18" fill="#87939a"/><rect x="26" y="14" width="4" height="14" fill="#40b6e0"/></svg>
<div style="position:absolute;left:116px;top:1223.66px;height:32px;line-height:32px;font-size:25.5px;color:#bbbbbb;font-family:'Liberation Sans', sans-serif;white-space:pre;-webkit-text-stroke:0.25px currentColor;transform:scaleX(0.9900);transform-origin:0 0;">Maven: org.springframework:spring-context:5.2.2.RELEASE</div>
<svg style="position:absolute;left:42px;top:1272px;overflow:visible" width="16" height="18" viewBox="0 0 16 18"><polygon points="0,0 16,9 0,18" fill="#a9a9a9"/></svg>
<svg style="position:absolute;left:78px;top:1267px;overflow:visible" width="31" height="30" viewBox="0 0 31 30"><path d="M0,0 H10 L13,4 H23 V24 H0 Z" fill="#87939a"/><rect x="13" y="8" width="17" height="21" fill="#3c3f41"/><rect x="14" y="14" width="4" height="14" fill="#62b543"/><rect x="20" y="10" width="4" height="18" fill="#87939a"/><rect x="26" y="14" width="4" height="14" fill="#40b6e0"/></svg>
<div style="position:absolute;left:116px;top:1263.66px;height:32px;line-height:32px;font-size:25.5px;color:#bbbbbb;font-family:'Liberation Sans', sans-serif;white-space:pre;-webkit-text-stroke:0.25px currentColor;transform:scaleX(0.9900);transform-origin:0 0;">Maven: org.springframework:spring-core:5.2.2.RELEASE</div>
<svg style="position:absolute;left:42px;top:1312px;overflow:visible" width="16" height="18" viewBox="0 0 16 18"><polygon points="0,0 16,9 0,18" fill="#a9a9a9"/></svg>
<svg style="position:absolute;left:78px;top:1307px;overflow:visible" width="31" height="30" viewBox="0 0 31 30"><path d="M0,0 H10 L13,4 H23 V24 H0 Z" fill="#87939a"/><rect x="13" y="8" width="17" height="21" fill="#3c3f41"/><rect x="14" y="14" width="4" height="14" fill="#62b543"/><rect x="20" y="10" width="4" height="18" fill="#87939a"/><rect x="26" y="14" width="4" height="14" fill="#40b6e0"/></svg>
<div style="position:absolute;left:116px;top:1303.66px;height:32px;line-height:32px;font-size:25.5px;color:#bbbbbb;font-family:'Liberation Sans', sans-serif;white-space:pre;-webkit-text-stroke:0.25px currentColor;transform:scaleX(0.9900);transform-origin:0 0;">Maven: org.springframework:spring-expression:5.2.2.RELEASE</div>
<svg style="position:absolute;left:42px;top:1352px;overflow:visible" width="16" height="18" viewBox="0 0 16 18"><polygon points="0,0 16,9 0,18" fill="#a9a9a9"/></svg>
<svg style="position:absolute;left:78px;top:1347px;overflow:visible" width="31" height="30" viewBox="0 0 31 30"><path d="M0,0 H10 L13,4 H23 V24 H0 Z" fill="#87939a"/><rect x="13" y="8" width="17" height="21" fill="#3c3f41"/><rect x="14" y="14" width="4" height="14" fill="#62b543"/><rect x="20" y="10" width="4" height="18" fill="#87939a"/><rect x="26" y="14" width="4" height="14" fill="#40b6e0"/></svg>
<div style="position:absolute;left:116px;top:1343.66px;height:32px;line-height:32px;font-size:25.5px;color:#bbbbbb;font-family:'Liberation Sans', sans-serif;white-space:pre;-webkit-text-stroke:0.25px currentColor;transform:scaleX(0.9900);transform-origin:0 0;">Maven: org.springframework:spring-jcl:5.2.2.RELEASE</div>
<svg style="position:absolute;left:6px;top:1392px;overflow:visible" width="16" height="18" viewBox="0 0 16 18"><polygon points="0,0 16,9 0,18" fill="#a9a9a9"/></svg>
<svg style="position:absolute;left:42px;top:1385px;overflow:visible" width="32" height="34" viewBox="0 0 32 34"><rect x="0" y="0" width="22" height="18" fill="#87939a"/><path d="M4,4 L9,8 L4,12" fill="none" stroke="#3c3f41" stroke-width="2"/><circle cx="20" cy="21" r="11" fill="#40b6e0" stroke="#3c3f41" stroke-width="1.5"/><path d="M19,14 V21 L24,25" fill="none" stroke="#1f2d33" stroke-width="2"/></svg>
<div style="position:absolute;left:78px;top:1383.66px;height:32px;line-height:32px;font-size:25.5px;color:#bbbbbb;font-family:'Liberation Sans', sans-serif;white-space:pre;-webkit-text-stroke:0.25px currentColor;transform:scaleX(0.9689);transform-origin:0 0;">Scratches and Consoles</div>
<div style="position:absolute;left:692px;top:839px;width:16px;height:589px;background:rgba(90,92,94,0.6);border-radius:3px;"></div>
<div style="position:absolute;left:2px;top:1419px;width:434px;height:15px;background:rgba(90,92,94,0.85);border-radius:2px;"></div>
</div>
<svg style="position:absolute;left:0;top:0;overflow:visible" width="1" height="1"><g transform="translate(35,231) rotate(-90)"><text x="0" y="0" font-family="Liberation Sans" font-size="24.5" fill="#dedede" textLength="98" lengthAdjust="spacingAndGlyphs">1: Project</text><rect x="0" y="3" width="13" height="2" fill="#dedede"/></g></svg>
<svg style="position:absolute;left:14px;top:244px;" width="22" height="18" viewBox="0 0 22 18"><path d="M0,0 H8 L11,4 H22 V18 H0 Z" fill="#afb1b3"/></svg>
<svg style="position:absolute;left:0;top:0;overflow:visible" width="1" height="1"><g transform="translate(35,431) rotate(-90)"><text x="0" y="0" font-family="Liberation Sans" font-size="24.5" fill="#bbbbbb" textLength="121" lengthAdjust="spacingAndGlyphs">7: Structure</text><rect x="0" y="3" width="13" height="2" fill="#bbbbbb"/></g></svg>
<svg style="position:absolute;left:14px;top:444px;" width="22" height="18" viewBox="0 0 22 18"><rect x="0" y="10" width="9" height="8" fill="#afb1b3"/><rect x="12" y="10" width="9" height="8" fill="#afb1b3"/><rect x="12" y="0" width="9" height="8" fill="#afb1b3"/></svg>
<svg style="position:absolute;left:0;top:0;overflow:visible" width="1" height="1"><g transform="translate(35,603) rotate(-90)"><text x="0" y="0" font-family="Liberation Sans" font-size="24.5" fill="#bbbbbb" textLength="95" lengthAdjust="spacingAndGlyphs">Commit</text></g></svg>
<svg style="position:absolute;left:12px;top:606px;" width="26" height="18" viewBox="0 0 26 18"><circle cx="13" cy="9" r="6" fill="none" stroke="#afb1b3" stroke-width="3"/><path d="M0,9 H7 M19,9 H26" stroke="#afb1b3" stroke-width="3"/></svg>
<svg style="position:absolute;left:0;top:0;overflow:visible" width="1" height="1"><g transform="translate(35,1547) rotate(-90)"><text x="0" y="0" font-family="Liberation Sans" font-size="24.5" fill="#bbbbbb" textLength="118" lengthAdjust="spacingAndGlyphs">2: Favorites</text><rect x="0" y="3" width="13" height="2" fill="#bbbbbb"/></g></svg>
<svg style="position:absolute;left:12px;top:1557px;" width="26" height="26" viewBox="0 0 26 26"><polygon points="13,0 16.5,9 26,9.5 18.5,15.5 21,25 13,19.5 5,25 7.5,15.5 0,9.5 9.5,9" fill="#afb1b3"/></svg>
<div style="position:absolute;left:2822px;top:132px;font-family:'Liberation Sans',sans-serif;font-style:italic;font-weight:bold;font-size:31px;line-height:30px;color:#adadad;">m</div>
<svg style="position:absolute;left:0;top:0;overflow:visible" width="1" height="1"><g transform="translate(2826,172) rotate(90)"><text x="0" y="0" font-family="Liberation Sans" font-size="24.5" fill="#bbbbbb" textLength="69" lengthAdjust="spacingAndGlyphs">Maven</text></g></svg>
<svg style="position:absolute;left:2825px;top:285px;" width="24" height="24" viewBox="0 0 24 24"><circle cx="12" cy="12" r="10" fill="none" stroke="#adadad" stroke-width="3"/><path d="M4,10 L9,6 L11,11 L15,10 L17,15 L13,20 L10,15 L6,17 Z M15,4 L20,7 L17,9 Z" fill="#adadad"/></svg>
<svg style="position:absolute;left:0;top:0;overflow:visible" width="1" height="1"><g transform="translate(2826,318) rotate(90)"><text x="0" y="0" font-family="Liberation Sans" font-size="24.5" fill="#bbbbbb" textLength="119" lengthAdjust="spacingAndGlyphs">RestfulTool</text></g></svg>
<svg style="position:absolute;left:2825px;top:479px;" width="24" height="27" viewBox="0 0 24 27"><ellipse cx="11.5" cy="3.5" rx="11" ry="3.5" fill="#adadad"/><rect x="0.5" y="7.5" width="22" height="5" rx="2.5" fill="#adadad"/><rect x="0.5" y="14" width="22" height="5" rx="2.5" fill="#adadad"/><rect x="0.5" y="20.5" width="22" height="5" rx="2.5" fill="#adadad"/></svg>
<svg style="position:absolute;left:0;top:0;overflow:visible" width="1" height="1"><g transform="translate(2826,515) rotate(90)"><text x="0" y="0" font-family="Liberation Sans" font-size="24.5" fill="#bbbbbb" textLength="96" lengthAdjust="spacingAndGlyphs">Database</text></g></svg>
<svg style="position:absolute;left:2825px;top:649px;" width="24" height="26" viewBox="0 0 24 26"><ellipse cx="12" cy="14" rx="5" ry="7" fill="#adadad"/><circle cx="12" cy="5" r="3.5" fill="#adadad"/><path d="M1,6 L8,11 M23,6 L16,11 M0,14 H8 M24,14 H16 M1,24 L8,18 M23,24 L16,18 M9,1 L11,3 M15,1 L13,3" stroke="#adadad" stroke-width="2.2"/></svg>
<svg style="position:absolute;left:0;top:0;overflow:visible" width="1" height="1"><g transform="translate(2826,685) rotate(90)"><text x="0" y="0" font-family="Liberation Sans" font-size="24.5" fill="#bbbbbb" textLength="36" lengthAdjust="spacingAndGlyphs">Ant</text></g></svg>
<svg style="position:absolute;left:67px;top:1619px;" width="22" height="24" viewBox="0 0 22 24"><path d="M3,24 V4 M3,12 H10 C14,12 16,10 16,6 V3" fill="none" stroke="#afb1b3" stroke-width="3.5"/><polygon points="10,5 16,-3 22,5" fill="#afb1b3"/></svg>
<div style="position:absolute;left:98.6px;top:1617.86px;height:29px;line-height:29px;font-size:23.5px;color:#bbbbbb;font-family:'Liberation Sans', sans-serif;white-space:pre;-webkit-text-stroke:0.25px currentColor;transform:scaleX(0.9616);transform-origin:0 0;">9: Git</div>
<div style="position:absolute;left:99px;top:1643.5px;width:13px;height:2px;background:#bbbbbb;"></div>
<svg style="position:absolute;left:196px;top:1619px;" width="24" height="26" viewBox="0 0 24 26"><circle cx="9.5" cy="9.5" r="7.5" fill="none" stroke="#afb1b3" stroke-width="3"/><path d="M15,15 L23,24" stroke="#afb1b3" stroke-width="4"/></svg>
<div style="position:absolute;left:228px;top:1617.86px;height:29px;line-height:29px;font-size:23.5px;color:#bbbbbb;font-family:'Liberation Sans', sans-serif;white-space:pre;-webkit-text-stroke:0.25px currentColor;transform:scaleX(0.9744);transform-origin:0 0;">3: Find</div>
<div style="position:absolute;left:228px;top:1643.5px;width:13px;height:2px;background:#bbbbbb;"></div>
<svg style="position:absolute;left:344px;top:1620px;" width="18" height="22" viewBox="0 0 18 22"><polygon points="0,0 17,11 0,22" fill="#afb1b3"/></svg>
<div style="position:absolute;left:374px;top:1617.86px;height:29px;line-height:29px;font-size:23.5px;color:#bbbbbb;font-family:'Liberation Sans', sans-serif;white-space:pre;-webkit-text-stroke:0.25px currentColor;transform:scaleX(0.9533);transform-origin:0 0;">4: Run</div>
<div style="position:absolute;left:374px;top:1643.5px;width:13px;height:2px;background:#bbbbbb;"></div>
<svg style="position:absolute;left:485px;top:1622px;" width="22" height="18" viewBox="0 0 22 18"><path d="M0,2 H4 M7,2 H22 M0,9 H4 M7,9 H22 M0,16 H4 M7,16 H22" stroke="#afb1b3" stroke-width="3"/></svg>
<div style="position:absolute;left:516.5px;top:1617.86px;height:29px;line-height:29px;font-size:23.5px;color:#bbbbbb;font-family:'Liberation Sans', sans-serif;white-space:pre;-webkit-text-stroke:0.25px currentColor;transform:scaleX(0.9661);transform-origin:0 0;">6: TODO</div>
<div style="position:absolute;left:516px;top:1643.5px;width:13px;height:2px;background:#bbbbbb;"></div>
<svg style="position:absolute;left:653px;top:1622px;" width="23" height="18" viewBox="0 0 23 18"><path d="M0,2 H22 M0,9 H14 M0,16 H22" stroke="#afb1b3" stroke-width="3"/></svg>
<div style="position:absolute;left:686px;top:1617.86px;height:29px;line-height:29px;font-size:23.5px;color:#bbbbbb;font-family:'Liberation Sans', sans-serif;white-space:pre;-webkit-text-stroke:0.25px currentColor;transform:scaleX(0.9458);transform-origin:0 0;">0: Messages</div>
<div style="position:absolute;left:686px;top:1643.5px;width:13px;height:2px;background:#bbbbbb;"></div>
<svg style="position:absolute;left:856px;top:1619px;" width="26" height="26" viewBox="0 0 26 26"><path d="M2,8 L10,1 L17,7 L13,10 L11,9 L8,11 Z" fill="#afb1b3"/><path d="M11,10 L24,24" stroke="#afb1b3" stroke-width="4.5"/></svg>
<div style="position:absolute;left:891px;top:1617.86px;height:29px;line-height:29px;font-size:23.5px;color:#bbbbbb;font-family:'Liberation Sans', sans-serif;white-space:pre;-webkit-text-stroke:0.25px currentColor;transform:scaleX(0.9760);transform-origin:0 0;">Build</div>
<svg style="position:absolute;left:982px;top:1619px;" width="26" height="26" viewBox="0 0 26 26"><path d="M2,24 C0,12 10,3 25,2 C26,16 18,24 6,22 Z" fill="#afb1b3"/><path d="M4,23 C8,16 13,11 20,7" stroke="#3c3f41" stroke-width="1.5" fill="none"/></svg>
<div style="position:absolute;left:1016px;top:1617.86px;height:29px;line-height:29px;font-size:23.5px;color:#bbbbbb;font-family:'Liberation Sans', sans-serif;white-space:pre;-webkit-text-stroke:0.25px currentColor;transform:scaleX(1.0011);transform-origin:0 0;">Spring</div>
<svg style="position:absolute;left:1129px;top:1620px;" width="24" height="22" viewBox="0 0 24 22"><rect x="0" y="0" width="24" height="22" fill="#afb1b3"/><path d="M4,5 L10,9 L4,13" fill="none" stroke="#3c3f41" stroke-width="2"/><path d="M11,17 H19" stroke="#3c3f41" stroke-width="2"/></svg>
<div style="position:absolute;left:1163px;top:1617.86px;height:29px;line-height:29px;font-size:23.5px;color:#bbbbbb;font-family:'Liberation Sans', sans-serif;white-space:pre;-webkit-text-stroke:0.25px currentColor;transform:scaleX(1.0135);transform-origin:0 0;">Terminal</div>
<svg style="position:absolute;left:2655px;top:1617px;" width="28" height="28" viewBox="0 0 28 28"><path d="M14,1 A13,13 0 1 0 14,27 H27 V14 A13,13 0 0 0 14,1 Z" fill="#499c54"/><text x="14" y="22" text-anchor="middle" font-family="Liberation Sans" font-weight="bold" font-size="19" fill="#ffffff">1</text></svg>
<div style="position:absolute;left:2691px;top:1617.86px;height:29px;line-height:29px;font-size:23.5px;color:#bbbbbb;font-family:'Liberation Sans', sans-serif;white-space:pre;-webkit-text-stroke:0.25px currentColor;transform:scaleX(0.9639);transform-origin:0 0;">Event Log</div>
<svg style="position:absolute;left:13px;top:1659px;" width="26" height="26" viewBox="0 0 26 26"><rect x="6" y="1.5" width="18" height="18" fill="none" stroke="#c4c4c4" stroke-width="2.2"/><path d="M2,5.5 V24 H20" fill="none" stroke="#c4c4c4" stroke-width="2.2"/></svg>
<div style="position:absolute;left:57px;top:1657.86px;height:29px;line-height:29px;font-size:23.5px;color:#bbbbbb;font-family:'Liberation Sans', sans-serif;white-space:pre;-webkit-text-stroke:0.25px currentColor;transform:scaleX(1.0783);transform-origin:0 0;">Build completed successfully in 1 s 490 ms (today 13:45)</div>
<div style="position:absolute;left:2311px;top:1657.86px;height:29px;line-height:29px;font-size:23.5px;color:#bbbbbb;font-family:'Liberation Sans', sans-serif;white-space:pre;-webkit-text-stroke:0.25px currentColor;transform:scaleX(1.0018);transform-origin:0 0;">327:41</div>
<div style="position:absolute;left:2411px;top:1657.86px;height:29px;line-height:29px;font-size:23.5px;color:#8c8c8c;font-family:'Liberation Sans', sans-serif;white-space:pre;-webkit-text-stroke:0.25px currentColor;transform:scaleX(0.8388);transform-origin:0 0;">LF</div>
<div style="position:absolute;left:2461px;top:1657.86px;height:29px;line-height:29px;font-size:23.5px;color:#8c8c8c;font-family:'Liberation Sans', sans-serif;white-space:pre;-webkit-text-stroke:0.25px currentColor;transform:scaleX(1.0515);transform-origin:0 0;">UTF-8</div>
<div style="position:absolute;left:2566px;top:1652px;width:292px;height:41px;background:#ffffff;"></div>
<div style="position:absolute;left:2566px;top:1652px;width:292px;height:2px;background:#dfe6f3;"></div>
<svg style="position:absolute;left:2510px;top:1640px;" width="70" height="53" viewBox="0 0 70 53"><path d="M8,16 L46,4 Q54,2 56,9 L70,53 L14,53 L3,24 Q1,18 8,16 Z" fill="#f26a2e"/><path d="M50,20 C38,10 14,14 14,24 C14,34 46,30 46,40 C46,50 22,52 12,44" fill="none" stroke="#ffffff" stroke-width="9" stroke-linecap="round"/></svg>
<div style="position:absolute;left:2589px;top:1660.61px;height:38px;line-height:38px;font-size:30px;color:#1a6fd8;font-family:'Liberation Sans', sans-serif;white-space:pre;-webkit-text-stroke:0.25px currentColor;font-weight:bold;">中</div>
<svg style="position:absolute;left:2643px;top:1668px;" width="22" height="24" viewBox="0 0 22 24"><circle cx="8" cy="6" r="5" fill="#1a6fd8"/><path d="M13,12 C18,17 14,22 6,24" stroke="#1a6fd8" stroke-width="3" fill="none"/></svg>
<svg style="position:absolute;left:2688px;top:1663px;" width="24" height="30" viewBox="0 0 24 30"><rect x="6" y="0" width="12" height="20" rx="6" fill="#1a6fd8"/><path d="M2,14 C2,26 22,26 22,14" fill="none" stroke="#1a6fd8" stroke-width="3"/><rect x="10.5" y="25" width="3" height="5" fill="#1a6fd8"/></svg>
<svg style="position:absolute;left:2734px;top:1666px;" width="30" height="25" viewBox="0 0 30 25"><rect x="1.5" y="1.5" width="27" height="22" rx="3" fill="none" stroke="#1a6fd8" stroke-width="3"/><path d="M6,8 H24 M6,13 H24 M10,18 H20 M12,4 V16 M18,4 V16" stroke="#1a6fd8" stroke-width="2.5"/></svg>
<svg style="position:absolute;left:2783px;top:1664px;" width="28" height="29" viewBox="0 0 28 29"><path d="M2,4 L9,0 C11,3 17,3 19,0 L26,4 L24,10 L21,9 V29 H7 V9 L4,10 Z" fill="#1a6fd8"/></svg>
<svg style="position:absolute;left:2830px;top:1667px;" width="28" height="26" viewBox="0 0 28 26"><rect x="0" y="0" width="12" height="12" rx="4" fill="#7a78e0"/><rect x="15" y="0" width="12" height="12" rx="4" fill="#5b7cf0" /><rect x="19" y="4" width="4" height="4" fill="#fff"/><rect x="0" y="14" width="12" height="12" rx="4" fill="#b45fb7"/><rect x="15" y="14" width="12" height="12" rx="4" fill="#6b7de8"/></svg>
<svg style="position:absolute;left:0;top:0;overflow:visible" width="1" height="1"><text x="2633" y="1683" font-family="Liberation Sans" font-size="22" fill="rgba(100,100,100,0.7)" textLength="209" lengthAdjust="spacingAndGlyphs">CSDN @只因为你而温柔</text></svg>
</body></html>
